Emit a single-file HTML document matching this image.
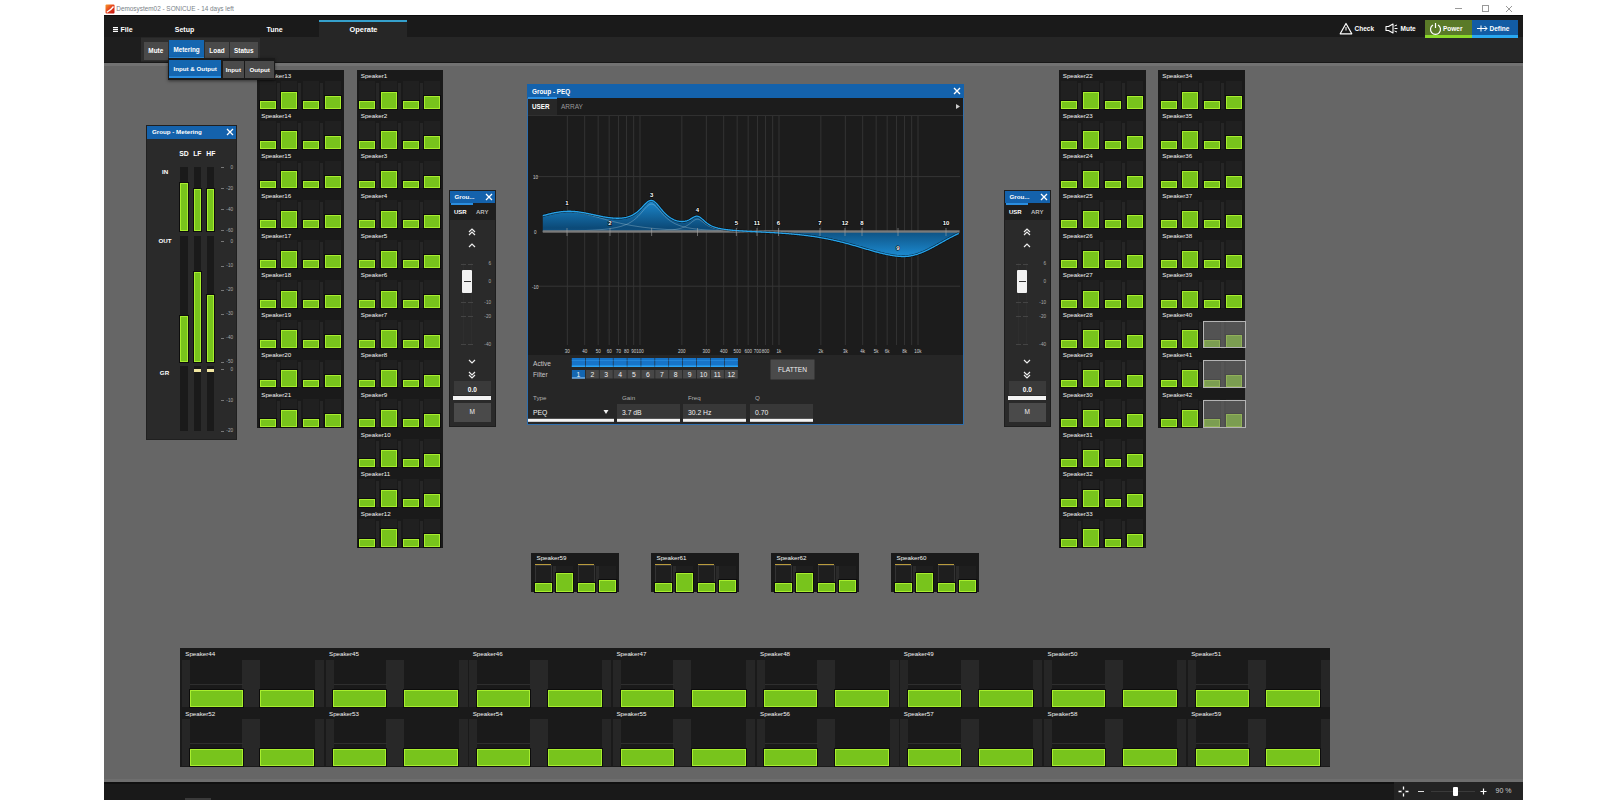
<!DOCTYPE html><html><head><meta charset="utf-8"><style>
html,body{margin:0;padding:0;background:#fff;width:1600px;height:800px;overflow:hidden;position:relative;font-family:"Liberation Sans",sans-serif}
body>div,body>svg{position:absolute}
.t{white-space:nowrap;line-height:12px;height:12px}
.c{width:120px;text-align:center}
.g{position:absolute;background:#78c41c;box-shadow:inset 0 0 0 1px #a8ee2e,0 0 0 1px #0d0d0d}
svg text{font-family:"Liberation Sans",sans-serif}
</style></head><body>
<div style="left:104px;top:15px;width:1419px;height:22px;background:#1a1a1a;"></div>
<div style="left:104px;top:15px;width:1419px;height:1.2px;background:#0c0c0c;"></div>
<div style="left:104px;top:37px;width:1419px;height:25px;background:#262626;"></div>
<div style="left:104px;top:37px;width:37px;height:25px;background:#1e1e1e;"></div>
<div style="left:104px;top:62px;width:1419px;height:720px;background:#666666;"></div>
<div style="left:104px;top:61.5px;width:1419px;height:1.5px;background:#181818;"></div>
<div style="left:104px;top:63px;width:1419px;height:2.5px;background:#727272;"></div>
<div style="left:104px;top:779px;width:1419px;height:3px;background:#6e6e6e;"></div>
<div style="left:104px;top:782px;width:1419px;height:18px;background:#191919;"></div>
<div style="left:104px;top:782px;width:1419px;height:1.5px;background:#101010;"></div>
<div style="left:1394px;top:782px;width:129px;height:18px;background:#232323;"></div>
<div style="left:185px;top:798px;width:26px;height:2px;background:#3a3a3a;"></div>
<svg style="left:104.5px;top:4px" width="10" height="10" viewBox="0 0 10 10"><defs><linearGradient id="ic" x1="0" y1="0" x2="1" y2="1"><stop offset="0" stop-color="#f59a2a"/><stop offset="0.45" stop-color="#e8481e"/><stop offset="1" stop-color="#c01010"/></linearGradient></defs><rect x="0.5" y="0.5" width="9" height="9" rx="1" fill="url(#ic)"/><path d="M8.5 2.5 Q6 6 1.8 8.3" fill="none" stroke="#fff" stroke-width="1.3"/></svg>
<div class="t" style="left:116.3px;top:3px;font-size:6.4px;color:#7a7f88;">Demosystem02 - SONICUE - 14 days left</div>
<div style="left:1455px;top:8px;width:7px;height:1px;background:#999;"></div>
<div style="left:1482px;top:5px;width:5px;height:5px;border:1px solid #999"></div>
<svg style="left:1505px;top:5px" width="8" height="8" viewBox="0 0 8 8"><path d="M1 1 L7 7 M7 1 L1 7" stroke="#999" stroke-width="1"/></svg>
<svg style="left:113px;top:26.5px" width="5" height="5" viewBox="0 0 5 5"><path d="M0 0.6 H5 M0 2.5 H5 M0 4.4 H5" stroke="#fff" stroke-width="1.1"/></svg>
<div class="t" style="left:120.5px;top:23.6px;font-size:7px;color:#fff;font-weight:bold">File</div>
<div class="t c" style="left:124.5px;top:23.6px;font-size:7px;color:#fff;font-weight:bold">Setup</div>
<div class="t c" style="left:214.5px;top:23.6px;font-size:7px;color:#fff;font-weight:bold">Tune</div>
<div style="left:319px;top:21px;width:88px;height:16px;background:#262626;"></div>
<div style="left:319px;top:19.5px;width:88px;height:2px;background:#35a0cc;"></div>
<div class="t c" style="left:303.5px;top:23.6px;font-size:7.4px;color:#fff;font-weight:bold">Operate</div>
<svg style="left:1339px;top:22px" width="14" height="13" viewBox="0 0 14 13"><path d="M7 1.5 L12.8 11.8 L1.2 11.8 Z" fill="none" stroke="#fff" stroke-width="1.2" stroke-linejoin="round"/><path d="M7 5 V8.5" stroke="#fff" stroke-width="1"/></svg>
<div class="t" style="left:1354.5px;top:23.3px;font-size:6.5px;color:#fff;font-weight:bold">Check</div>
<svg style="left:1385px;top:23px" width="13" height="11" viewBox="0 0 13 11"><path d="M1 3.5 H3.5 L8 1 V10 L3.5 7.5 H1 Z" fill="none" stroke="#fff" stroke-width="1.1" stroke-linejoin="round"/><path d="M9.5 3 L12 2 M9.5 5.5 H12.5 M9.5 8 L12 9" fill="none" stroke="#fff" stroke-width="1"/></svg>
<div class="t" style="left:1400.5px;top:23.3px;font-size:6.5px;color:#fff;font-weight:bold">Mute</div>
<div style="left:1425px;top:20px;width:47px;height:17px;background:#5a7a28;"></div>
<div style="left:1425px;top:34.8px;width:47px;height:2.8px;background:#8ad82a;"></div>
<svg style="left:1429px;top:22px" width="13" height="13" viewBox="0 0 13 13"><path d="M4 3 A5 5 0 1 0 9 3" fill="none" stroke="#fff" stroke-width="1.2"/><path d="M6.5 1 V6" stroke="#fff" stroke-width="1.2"/></svg>
<div class="t" style="left:1443px;top:23.3px;font-size:6.5px;color:#fff;font-weight:bold">Power</div>
<div style="left:1472px;top:20px;width:46px;height:17px;background:#125ca4;"></div>
<div style="left:1472px;top:34.8px;width:46px;height:2.8px;background:#2aa8f0;"></div>
<svg style="left:1476px;top:24px" width="12" height="9" viewBox="0 0 12 9"><path d="M1 4.5 H11 M8.5 2 L11 4.5 L8.5 7 M5 1.5 V7.5" fill="none" stroke="#fff" stroke-width="1"/></svg>
<div class="t" style="left:1489.5px;top:23.3px;font-size:6.5px;color:#fff;font-weight:bold">Define</div>
<div style="left:141px;top:38px;width:119px;height:23px;background:#2e2e2e;"></div>
<div style="left:144px;top:41.8px;width:23.6px;height:18.2px;background:#4a4a4a;"></div>
<div class="t c" style="left:95.80000000000001px;top:45.199999999999996px;font-size:6.4px;color:#fff;font-weight:bold">Mute</div>
<div style="left:169.2px;top:40.3px;width:34.7px;height:18.6px;background:#1466b0;"></div>
<div style="left:169.2px;top:56.6px;width:34.7px;height:2.3px;background:#2a8ee0;"></div>
<div class="t c" style="left:126.54999999999998px;top:43.89999999999999px;font-size:6.3px;color:#fff;font-weight:bold">Metering</div>
<div style="left:205.3px;top:41.8px;width:23.4px;height:18.2px;background:#4a4a4a;"></div>
<div class="t c" style="left:157.0px;top:45.199999999999996px;font-size:6.4px;color:#fff;font-weight:bold">Load</div>
<div style="left:229.7px;top:41.8px;width:28.1px;height:18.2px;background:#4a4a4a;"></div>
<div class="t c" style="left:183.75px;top:45.199999999999996px;font-size:6.4px;color:#fff;font-weight:bold">Status</div>
<div style="left:257px;top:70px;width:86.75px;height:358.2px;background:#1a1a1a;"></div>
<div class="t" style="left:261.3px;top:70.4px;font-size:6.2px;color:#f2f2f2;">Speaker13</div>
<div style="left:259.7px;top:81.0px;width:16px;height:27.8px;background:#202020;"></div>
<div style="left:276.7px;top:83.0px;width:3px;height:25.8px;background:#262626;"></div>
<div class="g" style="left:259.7px;top:101.0px;width:16px;height:7.8px"></div>
<div style="left:281.2px;top:81.0px;width:16px;height:27.8px;background:#202020;"></div>
<div style="left:298.2px;top:83.0px;width:3px;height:25.8px;background:#262626;"></div>
<div class="g" style="left:281.2px;top:91.5px;width:16px;height:17.3px"></div>
<div style="left:303.2px;top:81.0px;width:16px;height:27.8px;background:#202020;"></div>
<div style="left:320.2px;top:83.0px;width:3px;height:25.8px;background:#262626;"></div>
<div class="g" style="left:303.2px;top:101.0px;width:16px;height:7.8px"></div>
<div style="left:324.8px;top:81.0px;width:16px;height:27.8px;background:#202020;"></div>
<div class="g" style="left:324.8px;top:96.0px;width:16px;height:12.8px"></div>
<div class="t" style="left:261.3px;top:110.2px;font-size:6.2px;color:#f2f2f2;">Speaker14</div>
<div style="left:259.7px;top:120.8px;width:16px;height:27.8px;background:#202020;"></div>
<div style="left:276.7px;top:122.8px;width:3px;height:25.8px;background:#262626;"></div>
<div class="g" style="left:259.7px;top:140.79999999999998px;width:16px;height:7.8px"></div>
<div style="left:281.2px;top:120.8px;width:16px;height:27.8px;background:#202020;"></div>
<div style="left:298.2px;top:122.8px;width:3px;height:25.8px;background:#262626;"></div>
<div class="g" style="left:281.2px;top:131.29999999999998px;width:16px;height:17.3px"></div>
<div style="left:303.2px;top:120.8px;width:16px;height:27.8px;background:#202020;"></div>
<div style="left:320.2px;top:122.8px;width:3px;height:25.8px;background:#262626;"></div>
<div class="g" style="left:303.2px;top:140.79999999999998px;width:16px;height:7.8px"></div>
<div style="left:324.8px;top:120.8px;width:16px;height:27.8px;background:#202020;"></div>
<div class="g" style="left:324.8px;top:135.79999999999998px;width:16px;height:12.8px"></div>
<div class="t" style="left:261.3px;top:150.0px;font-size:6.2px;color:#f2f2f2;">Speaker15</div>
<div style="left:259.7px;top:160.6px;width:16px;height:27.8px;background:#202020;"></div>
<div style="left:276.7px;top:162.6px;width:3px;height:25.8px;background:#262626;"></div>
<div class="g" style="left:259.7px;top:180.59999999999997px;width:16px;height:7.8px"></div>
<div style="left:281.2px;top:160.6px;width:16px;height:27.8px;background:#202020;"></div>
<div style="left:298.2px;top:162.6px;width:3px;height:25.8px;background:#262626;"></div>
<div class="g" style="left:281.2px;top:171.09999999999997px;width:16px;height:17.3px"></div>
<div style="left:303.2px;top:160.6px;width:16px;height:27.8px;background:#202020;"></div>
<div style="left:320.2px;top:162.6px;width:3px;height:25.8px;background:#262626;"></div>
<div class="g" style="left:303.2px;top:180.59999999999997px;width:16px;height:7.8px"></div>
<div style="left:324.8px;top:160.6px;width:16px;height:27.8px;background:#202020;"></div>
<div class="g" style="left:324.8px;top:175.59999999999997px;width:16px;height:12.8px"></div>
<div class="t" style="left:261.3px;top:189.79999999999998px;font-size:6.2px;color:#f2f2f2;">Speaker16</div>
<div style="left:259.7px;top:200.39999999999998px;width:16px;height:27.8px;background:#202020;"></div>
<div style="left:276.7px;top:202.39999999999998px;width:3px;height:25.8px;background:#262626;"></div>
<div class="g" style="left:259.7px;top:220.39999999999998px;width:16px;height:7.8px"></div>
<div style="left:281.2px;top:200.39999999999998px;width:16px;height:27.8px;background:#202020;"></div>
<div style="left:298.2px;top:202.39999999999998px;width:3px;height:25.8px;background:#262626;"></div>
<div class="g" style="left:281.2px;top:210.89999999999998px;width:16px;height:17.3px"></div>
<div style="left:303.2px;top:200.39999999999998px;width:16px;height:27.8px;background:#202020;"></div>
<div style="left:320.2px;top:202.39999999999998px;width:3px;height:25.8px;background:#262626;"></div>
<div class="g" style="left:303.2px;top:220.39999999999998px;width:16px;height:7.8px"></div>
<div style="left:324.8px;top:200.39999999999998px;width:16px;height:27.8px;background:#202020;"></div>
<div class="g" style="left:324.8px;top:215.39999999999998px;width:16px;height:12.8px"></div>
<div class="t" style="left:261.3px;top:229.6px;font-size:6.2px;color:#f2f2f2;">Speaker17</div>
<div style="left:259.7px;top:240.2px;width:16px;height:27.8px;background:#202020;"></div>
<div style="left:276.7px;top:242.2px;width:3px;height:25.8px;background:#262626;"></div>
<div class="g" style="left:259.7px;top:260.2px;width:16px;height:7.8px"></div>
<div style="left:281.2px;top:240.2px;width:16px;height:27.8px;background:#202020;"></div>
<div style="left:298.2px;top:242.2px;width:3px;height:25.8px;background:#262626;"></div>
<div class="g" style="left:281.2px;top:250.7px;width:16px;height:17.3px"></div>
<div style="left:303.2px;top:240.2px;width:16px;height:27.8px;background:#202020;"></div>
<div style="left:320.2px;top:242.2px;width:3px;height:25.8px;background:#262626;"></div>
<div class="g" style="left:303.2px;top:260.2px;width:16px;height:7.8px"></div>
<div style="left:324.8px;top:240.2px;width:16px;height:27.8px;background:#202020;"></div>
<div class="g" style="left:324.8px;top:255.2px;width:16px;height:12.8px"></div>
<div class="t" style="left:261.3px;top:269.4px;font-size:6.2px;color:#f2f2f2;">Speaker18</div>
<div style="left:259.7px;top:280.0px;width:16px;height:27.8px;background:#202020;"></div>
<div style="left:276.7px;top:282.0px;width:3px;height:25.8px;background:#262626;"></div>
<div class="g" style="left:259.7px;top:300.0px;width:16px;height:7.8px"></div>
<div style="left:281.2px;top:280.0px;width:16px;height:27.8px;background:#202020;"></div>
<div style="left:298.2px;top:282.0px;width:3px;height:25.8px;background:#262626;"></div>
<div class="g" style="left:281.2px;top:290.5px;width:16px;height:17.3px"></div>
<div style="left:303.2px;top:280.0px;width:16px;height:27.8px;background:#202020;"></div>
<div style="left:320.2px;top:282.0px;width:3px;height:25.8px;background:#262626;"></div>
<div class="g" style="left:303.2px;top:300.0px;width:16px;height:7.8px"></div>
<div style="left:324.8px;top:280.0px;width:16px;height:27.8px;background:#202020;"></div>
<div class="g" style="left:324.8px;top:295.0px;width:16px;height:12.8px"></div>
<div class="t" style="left:261.3px;top:309.19999999999993px;font-size:6.2px;color:#f2f2f2;">Speaker19</div>
<div style="left:259.7px;top:319.79999999999995px;width:16px;height:27.8px;background:#202020;"></div>
<div style="left:276.7px;top:321.79999999999995px;width:3px;height:25.8px;background:#262626;"></div>
<div class="g" style="left:259.7px;top:339.79999999999995px;width:16px;height:7.8px"></div>
<div style="left:281.2px;top:319.79999999999995px;width:16px;height:27.8px;background:#202020;"></div>
<div style="left:298.2px;top:321.79999999999995px;width:3px;height:25.8px;background:#262626;"></div>
<div class="g" style="left:281.2px;top:330.29999999999995px;width:16px;height:17.3px"></div>
<div style="left:303.2px;top:319.79999999999995px;width:16px;height:27.8px;background:#202020;"></div>
<div style="left:320.2px;top:321.79999999999995px;width:3px;height:25.8px;background:#262626;"></div>
<div class="g" style="left:303.2px;top:339.79999999999995px;width:16px;height:7.8px"></div>
<div style="left:324.8px;top:319.79999999999995px;width:16px;height:27.8px;background:#202020;"></div>
<div class="g" style="left:324.8px;top:334.79999999999995px;width:16px;height:12.8px"></div>
<div class="t" style="left:261.3px;top:348.99999999999994px;font-size:6.2px;color:#f2f2f2;">Speaker20</div>
<div style="left:259.7px;top:359.59999999999997px;width:16px;height:27.8px;background:#202020;"></div>
<div style="left:276.7px;top:361.59999999999997px;width:3px;height:25.8px;background:#262626;"></div>
<div class="g" style="left:259.7px;top:379.59999999999997px;width:16px;height:7.8px"></div>
<div style="left:281.2px;top:359.59999999999997px;width:16px;height:27.8px;background:#202020;"></div>
<div style="left:298.2px;top:361.59999999999997px;width:3px;height:25.8px;background:#262626;"></div>
<div class="g" style="left:281.2px;top:370.09999999999997px;width:16px;height:17.3px"></div>
<div style="left:303.2px;top:359.59999999999997px;width:16px;height:27.8px;background:#202020;"></div>
<div style="left:320.2px;top:361.59999999999997px;width:3px;height:25.8px;background:#262626;"></div>
<div class="g" style="left:303.2px;top:379.59999999999997px;width:16px;height:7.8px"></div>
<div style="left:324.8px;top:359.59999999999997px;width:16px;height:27.8px;background:#202020;"></div>
<div class="g" style="left:324.8px;top:374.59999999999997px;width:16px;height:12.8px"></div>
<div class="t" style="left:261.3px;top:388.79999999999995px;font-size:6.2px;color:#f2f2f2;">Speaker21</div>
<div style="left:259.7px;top:399.4px;width:16px;height:27.8px;background:#202020;"></div>
<div style="left:276.7px;top:401.4px;width:3px;height:25.8px;background:#262626;"></div>
<div class="g" style="left:259.7px;top:419.4px;width:16px;height:7.8px"></div>
<div style="left:281.2px;top:399.4px;width:16px;height:27.8px;background:#202020;"></div>
<div style="left:298.2px;top:401.4px;width:3px;height:25.8px;background:#262626;"></div>
<div class="g" style="left:281.2px;top:409.9px;width:16px;height:17.3px"></div>
<div style="left:303.2px;top:399.4px;width:16px;height:27.8px;background:#202020;"></div>
<div style="left:320.2px;top:401.4px;width:3px;height:25.8px;background:#262626;"></div>
<div class="g" style="left:303.2px;top:419.4px;width:16px;height:7.8px"></div>
<div style="left:324.8px;top:399.4px;width:16px;height:27.8px;background:#202020;"></div>
<div class="g" style="left:324.8px;top:414.4px;width:16px;height:12.8px"></div>
<div style="left:356.5px;top:70px;width:86.5px;height:477.59999999999997px;background:#1a1a1a;"></div>
<div class="t" style="left:360.8px;top:70.4px;font-size:6.2px;color:#f2f2f2;">Speaker1</div>
<div style="left:359.1922190201729px;top:81.0px;width:16px;height:27.8px;background:#202020;"></div>
<div style="left:376.1922190201729px;top:83.0px;width:3px;height:25.8px;background:#262626;"></div>
<div class="g" style="left:359.1922190201729px;top:101.0px;width:16px;height:7.8px"></div>
<div style="left:380.6302593659942px;top:81.0px;width:16px;height:27.8px;background:#202020;"></div>
<div style="left:397.6302593659942px;top:83.0px;width:3px;height:25.8px;background:#262626;"></div>
<div class="g" style="left:380.6302593659942px;top:91.5px;width:16px;height:17.3px"></div>
<div style="left:402.56685878962537px;top:81.0px;width:16px;height:27.8px;background:#202020;"></div>
<div style="left:419.56685878962537px;top:83.0px;width:3px;height:25.8px;background:#262626;"></div>
<div class="g" style="left:402.56685878962537px;top:101.0px;width:16px;height:7.8px"></div>
<div style="left:424.1046109510086px;top:81.0px;width:16px;height:27.8px;background:#202020;"></div>
<div class="g" style="left:424.1046109510086px;top:96.0px;width:16px;height:12.8px"></div>
<div class="t" style="left:360.8px;top:110.2px;font-size:6.2px;color:#f2f2f2;">Speaker2</div>
<div style="left:359.1922190201729px;top:120.8px;width:16px;height:27.8px;background:#202020;"></div>
<div style="left:376.1922190201729px;top:122.8px;width:3px;height:25.8px;background:#262626;"></div>
<div class="g" style="left:359.1922190201729px;top:140.79999999999998px;width:16px;height:7.8px"></div>
<div style="left:380.6302593659942px;top:120.8px;width:16px;height:27.8px;background:#202020;"></div>
<div style="left:397.6302593659942px;top:122.8px;width:3px;height:25.8px;background:#262626;"></div>
<div class="g" style="left:380.6302593659942px;top:131.29999999999998px;width:16px;height:17.3px"></div>
<div style="left:402.56685878962537px;top:120.8px;width:16px;height:27.8px;background:#202020;"></div>
<div style="left:419.56685878962537px;top:122.8px;width:3px;height:25.8px;background:#262626;"></div>
<div class="g" style="left:402.56685878962537px;top:140.79999999999998px;width:16px;height:7.8px"></div>
<div style="left:424.1046109510086px;top:120.8px;width:16px;height:27.8px;background:#202020;"></div>
<div class="g" style="left:424.1046109510086px;top:135.79999999999998px;width:16px;height:12.8px"></div>
<div class="t" style="left:360.8px;top:150.0px;font-size:6.2px;color:#f2f2f2;">Speaker3</div>
<div style="left:359.1922190201729px;top:160.6px;width:16px;height:27.8px;background:#202020;"></div>
<div style="left:376.1922190201729px;top:162.6px;width:3px;height:25.8px;background:#262626;"></div>
<div class="g" style="left:359.1922190201729px;top:180.59999999999997px;width:16px;height:7.8px"></div>
<div style="left:380.6302593659942px;top:160.6px;width:16px;height:27.8px;background:#202020;"></div>
<div style="left:397.6302593659942px;top:162.6px;width:3px;height:25.8px;background:#262626;"></div>
<div class="g" style="left:380.6302593659942px;top:171.09999999999997px;width:16px;height:17.3px"></div>
<div style="left:402.56685878962537px;top:160.6px;width:16px;height:27.8px;background:#202020;"></div>
<div style="left:419.56685878962537px;top:162.6px;width:3px;height:25.8px;background:#262626;"></div>
<div class="g" style="left:402.56685878962537px;top:180.59999999999997px;width:16px;height:7.8px"></div>
<div style="left:424.1046109510086px;top:160.6px;width:16px;height:27.8px;background:#202020;"></div>
<div class="g" style="left:424.1046109510086px;top:175.59999999999997px;width:16px;height:12.8px"></div>
<div class="t" style="left:360.8px;top:189.79999999999998px;font-size:6.2px;color:#f2f2f2;">Speaker4</div>
<div style="left:359.1922190201729px;top:200.39999999999998px;width:16px;height:27.8px;background:#202020;"></div>
<div style="left:376.1922190201729px;top:202.39999999999998px;width:3px;height:25.8px;background:#262626;"></div>
<div class="g" style="left:359.1922190201729px;top:220.39999999999998px;width:16px;height:7.8px"></div>
<div style="left:380.6302593659942px;top:200.39999999999998px;width:16px;height:27.8px;background:#202020;"></div>
<div style="left:397.6302593659942px;top:202.39999999999998px;width:3px;height:25.8px;background:#262626;"></div>
<div class="g" style="left:380.6302593659942px;top:210.89999999999998px;width:16px;height:17.3px"></div>
<div style="left:402.56685878962537px;top:200.39999999999998px;width:16px;height:27.8px;background:#202020;"></div>
<div style="left:419.56685878962537px;top:202.39999999999998px;width:3px;height:25.8px;background:#262626;"></div>
<div class="g" style="left:402.56685878962537px;top:220.39999999999998px;width:16px;height:7.8px"></div>
<div style="left:424.1046109510086px;top:200.39999999999998px;width:16px;height:27.8px;background:#202020;"></div>
<div class="g" style="left:424.1046109510086px;top:215.39999999999998px;width:16px;height:12.8px"></div>
<div class="t" style="left:360.8px;top:229.6px;font-size:6.2px;color:#f2f2f2;">Speaker5</div>
<div style="left:359.1922190201729px;top:240.2px;width:16px;height:27.8px;background:#202020;"></div>
<div style="left:376.1922190201729px;top:242.2px;width:3px;height:25.8px;background:#262626;"></div>
<div class="g" style="left:359.1922190201729px;top:260.2px;width:16px;height:7.8px"></div>
<div style="left:380.6302593659942px;top:240.2px;width:16px;height:27.8px;background:#202020;"></div>
<div style="left:397.6302593659942px;top:242.2px;width:3px;height:25.8px;background:#262626;"></div>
<div class="g" style="left:380.6302593659942px;top:250.7px;width:16px;height:17.3px"></div>
<div style="left:402.56685878962537px;top:240.2px;width:16px;height:27.8px;background:#202020;"></div>
<div style="left:419.56685878962537px;top:242.2px;width:3px;height:25.8px;background:#262626;"></div>
<div class="g" style="left:402.56685878962537px;top:260.2px;width:16px;height:7.8px"></div>
<div style="left:424.1046109510086px;top:240.2px;width:16px;height:27.8px;background:#202020;"></div>
<div class="g" style="left:424.1046109510086px;top:255.2px;width:16px;height:12.8px"></div>
<div class="t" style="left:360.8px;top:269.4px;font-size:6.2px;color:#f2f2f2;">Speaker6</div>
<div style="left:359.1922190201729px;top:280.0px;width:16px;height:27.8px;background:#202020;"></div>
<div style="left:376.1922190201729px;top:282.0px;width:3px;height:25.8px;background:#262626;"></div>
<div class="g" style="left:359.1922190201729px;top:300.0px;width:16px;height:7.8px"></div>
<div style="left:380.6302593659942px;top:280.0px;width:16px;height:27.8px;background:#202020;"></div>
<div style="left:397.6302593659942px;top:282.0px;width:3px;height:25.8px;background:#262626;"></div>
<div class="g" style="left:380.6302593659942px;top:290.5px;width:16px;height:17.3px"></div>
<div style="left:402.56685878962537px;top:280.0px;width:16px;height:27.8px;background:#202020;"></div>
<div style="left:419.56685878962537px;top:282.0px;width:3px;height:25.8px;background:#262626;"></div>
<div class="g" style="left:402.56685878962537px;top:300.0px;width:16px;height:7.8px"></div>
<div style="left:424.1046109510086px;top:280.0px;width:16px;height:27.8px;background:#202020;"></div>
<div class="g" style="left:424.1046109510086px;top:295.0px;width:16px;height:12.8px"></div>
<div class="t" style="left:360.8px;top:309.19999999999993px;font-size:6.2px;color:#f2f2f2;">Speaker7</div>
<div style="left:359.1922190201729px;top:319.79999999999995px;width:16px;height:27.8px;background:#202020;"></div>
<div style="left:376.1922190201729px;top:321.79999999999995px;width:3px;height:25.8px;background:#262626;"></div>
<div class="g" style="left:359.1922190201729px;top:339.79999999999995px;width:16px;height:7.8px"></div>
<div style="left:380.6302593659942px;top:319.79999999999995px;width:16px;height:27.8px;background:#202020;"></div>
<div style="left:397.6302593659942px;top:321.79999999999995px;width:3px;height:25.8px;background:#262626;"></div>
<div class="g" style="left:380.6302593659942px;top:330.29999999999995px;width:16px;height:17.3px"></div>
<div style="left:402.56685878962537px;top:319.79999999999995px;width:16px;height:27.8px;background:#202020;"></div>
<div style="left:419.56685878962537px;top:321.79999999999995px;width:3px;height:25.8px;background:#262626;"></div>
<div class="g" style="left:402.56685878962537px;top:339.79999999999995px;width:16px;height:7.8px"></div>
<div style="left:424.1046109510086px;top:319.79999999999995px;width:16px;height:27.8px;background:#202020;"></div>
<div class="g" style="left:424.1046109510086px;top:334.79999999999995px;width:16px;height:12.8px"></div>
<div class="t" style="left:360.8px;top:348.99999999999994px;font-size:6.2px;color:#f2f2f2;">Speaker8</div>
<div style="left:359.1922190201729px;top:359.59999999999997px;width:16px;height:27.8px;background:#202020;"></div>
<div style="left:376.1922190201729px;top:361.59999999999997px;width:3px;height:25.8px;background:#262626;"></div>
<div class="g" style="left:359.1922190201729px;top:379.59999999999997px;width:16px;height:7.8px"></div>
<div style="left:380.6302593659942px;top:359.59999999999997px;width:16px;height:27.8px;background:#202020;"></div>
<div style="left:397.6302593659942px;top:361.59999999999997px;width:3px;height:25.8px;background:#262626;"></div>
<div class="g" style="left:380.6302593659942px;top:370.09999999999997px;width:16px;height:17.3px"></div>
<div style="left:402.56685878962537px;top:359.59999999999997px;width:16px;height:27.8px;background:#202020;"></div>
<div style="left:419.56685878962537px;top:361.59999999999997px;width:3px;height:25.8px;background:#262626;"></div>
<div class="g" style="left:402.56685878962537px;top:379.59999999999997px;width:16px;height:7.8px"></div>
<div style="left:424.1046109510086px;top:359.59999999999997px;width:16px;height:27.8px;background:#202020;"></div>
<div class="g" style="left:424.1046109510086px;top:374.59999999999997px;width:16px;height:12.8px"></div>
<div class="t" style="left:360.8px;top:388.79999999999995px;font-size:6.2px;color:#f2f2f2;">Speaker9</div>
<div style="left:359.1922190201729px;top:399.4px;width:16px;height:27.8px;background:#202020;"></div>
<div style="left:376.1922190201729px;top:401.4px;width:3px;height:25.8px;background:#262626;"></div>
<div class="g" style="left:359.1922190201729px;top:419.4px;width:16px;height:7.8px"></div>
<div style="left:380.6302593659942px;top:399.4px;width:16px;height:27.8px;background:#202020;"></div>
<div style="left:397.6302593659942px;top:401.4px;width:3px;height:25.8px;background:#262626;"></div>
<div class="g" style="left:380.6302593659942px;top:409.9px;width:16px;height:17.3px"></div>
<div style="left:402.56685878962537px;top:399.4px;width:16px;height:27.8px;background:#202020;"></div>
<div style="left:419.56685878962537px;top:401.4px;width:3px;height:25.8px;background:#262626;"></div>
<div class="g" style="left:402.56685878962537px;top:419.4px;width:16px;height:7.8px"></div>
<div style="left:424.1046109510086px;top:399.4px;width:16px;height:27.8px;background:#202020;"></div>
<div class="g" style="left:424.1046109510086px;top:414.4px;width:16px;height:12.8px"></div>
<div class="t" style="left:360.8px;top:428.59999999999997px;font-size:6.2px;color:#f2f2f2;">Speaker10</div>
<div style="left:359.1922190201729px;top:439.2px;width:16px;height:27.8px;background:#202020;"></div>
<div style="left:376.1922190201729px;top:441.2px;width:3px;height:25.8px;background:#262626;"></div>
<div class="g" style="left:359.1922190201729px;top:459.2px;width:16px;height:7.8px"></div>
<div style="left:380.6302593659942px;top:439.2px;width:16px;height:27.8px;background:#202020;"></div>
<div style="left:397.6302593659942px;top:441.2px;width:3px;height:25.8px;background:#262626;"></div>
<div class="g" style="left:380.6302593659942px;top:449.7px;width:16px;height:17.3px"></div>
<div style="left:402.56685878962537px;top:439.2px;width:16px;height:27.8px;background:#202020;"></div>
<div style="left:419.56685878962537px;top:441.2px;width:3px;height:25.8px;background:#262626;"></div>
<div class="g" style="left:402.56685878962537px;top:459.2px;width:16px;height:7.8px"></div>
<div style="left:424.1046109510086px;top:439.2px;width:16px;height:27.8px;background:#202020;"></div>
<div class="g" style="left:424.1046109510086px;top:454.2px;width:16px;height:12.8px"></div>
<div class="t" style="left:360.8px;top:468.4px;font-size:6.2px;color:#f2f2f2;">Speaker11</div>
<div style="left:359.1922190201729px;top:479.0px;width:16px;height:27.8px;background:#202020;"></div>
<div style="left:376.1922190201729px;top:481.0px;width:3px;height:25.8px;background:#262626;"></div>
<div class="g" style="left:359.1922190201729px;top:499.0px;width:16px;height:7.8px"></div>
<div style="left:380.6302593659942px;top:479.0px;width:16px;height:27.8px;background:#202020;"></div>
<div style="left:397.6302593659942px;top:481.0px;width:3px;height:25.8px;background:#262626;"></div>
<div class="g" style="left:380.6302593659942px;top:489.5px;width:16px;height:17.3px"></div>
<div style="left:402.56685878962537px;top:479.0px;width:16px;height:27.8px;background:#202020;"></div>
<div style="left:419.56685878962537px;top:481.0px;width:3px;height:25.8px;background:#262626;"></div>
<div class="g" style="left:402.56685878962537px;top:499.0px;width:16px;height:7.8px"></div>
<div style="left:424.1046109510086px;top:479.0px;width:16px;height:27.8px;background:#202020;"></div>
<div class="g" style="left:424.1046109510086px;top:494.0px;width:16px;height:12.8px"></div>
<div class="t" style="left:360.8px;top:508.19999999999993px;font-size:6.2px;color:#f2f2f2;">Speaker12</div>
<div style="left:359.1922190201729px;top:518.8px;width:16px;height:27.8px;background:#202020;"></div>
<div style="left:376.1922190201729px;top:520.8px;width:3px;height:25.8px;background:#262626;"></div>
<div class="g" style="left:359.1922190201729px;top:538.8px;width:16px;height:7.8px"></div>
<div style="left:380.6302593659942px;top:518.8px;width:16px;height:27.8px;background:#202020;"></div>
<div style="left:397.6302593659942px;top:520.8px;width:3px;height:25.8px;background:#262626;"></div>
<div class="g" style="left:380.6302593659942px;top:529.3px;width:16px;height:17.3px"></div>
<div style="left:402.56685878962537px;top:518.8px;width:16px;height:27.8px;background:#202020;"></div>
<div style="left:419.56685878962537px;top:520.8px;width:3px;height:25.8px;background:#262626;"></div>
<div class="g" style="left:402.56685878962537px;top:538.8px;width:16px;height:7.8px"></div>
<div style="left:424.1046109510086px;top:518.8px;width:16px;height:27.8px;background:#202020;"></div>
<div class="g" style="left:424.1046109510086px;top:533.8px;width:16px;height:12.8px"></div>
<div style="left:1058.5px;top:70px;width:87.8px;height:477.59999999999997px;background:#1a1a1a;"></div>
<div class="t" style="left:1062.8px;top:70.4px;font-size:6.2px;color:#f2f2f2;">Speaker22</div>
<div style="left:1061.2326801152738px;top:81.0px;width:16px;height:27.8px;background:#202020;"></div>
<div style="left:1078.2326801152738px;top:83.0px;width:3px;height:25.8px;background:#262626;"></div>
<div class="g" style="left:1061.2326801152738px;top:101.0px;width:16px;height:7.8px"></div>
<div style="left:1082.9929106628242px;top:81.0px;width:16px;height:27.8px;background:#202020;"></div>
<div style="left:1099.9929106628242px;top:83.0px;width:3px;height:25.8px;background:#262626;"></div>
<div class="g" style="left:1082.9929106628242px;top:91.5px;width:16px;height:17.3px"></div>
<div style="left:1105.2591930835736px;top:81.0px;width:16px;height:27.8px;background:#202020;"></div>
<div style="left:1122.2591930835736px;top:83.0px;width:3px;height:25.8px;background:#262626;"></div>
<div class="g" style="left:1105.2591930835736px;top:101.0px;width:16px;height:7.8px"></div>
<div style="left:1127.1206340057638px;top:81.0px;width:16px;height:27.8px;background:#202020;"></div>
<div class="g" style="left:1127.1206340057638px;top:96.0px;width:16px;height:12.8px"></div>
<div class="t" style="left:1062.8px;top:110.2px;font-size:6.2px;color:#f2f2f2;">Speaker23</div>
<div style="left:1061.2326801152738px;top:120.8px;width:16px;height:27.8px;background:#202020;"></div>
<div style="left:1078.2326801152738px;top:122.8px;width:3px;height:25.8px;background:#262626;"></div>
<div class="g" style="left:1061.2326801152738px;top:140.79999999999998px;width:16px;height:7.8px"></div>
<div style="left:1082.9929106628242px;top:120.8px;width:16px;height:27.8px;background:#202020;"></div>
<div style="left:1099.9929106628242px;top:122.8px;width:3px;height:25.8px;background:#262626;"></div>
<div class="g" style="left:1082.9929106628242px;top:131.29999999999998px;width:16px;height:17.3px"></div>
<div style="left:1105.2591930835736px;top:120.8px;width:16px;height:27.8px;background:#202020;"></div>
<div style="left:1122.2591930835736px;top:122.8px;width:3px;height:25.8px;background:#262626;"></div>
<div class="g" style="left:1105.2591930835736px;top:140.79999999999998px;width:16px;height:7.8px"></div>
<div style="left:1127.1206340057638px;top:120.8px;width:16px;height:27.8px;background:#202020;"></div>
<div class="g" style="left:1127.1206340057638px;top:135.79999999999998px;width:16px;height:12.8px"></div>
<div class="t" style="left:1062.8px;top:150.0px;font-size:6.2px;color:#f2f2f2;">Speaker24</div>
<div style="left:1061.2326801152738px;top:160.6px;width:16px;height:27.8px;background:#202020;"></div>
<div style="left:1078.2326801152738px;top:162.6px;width:3px;height:25.8px;background:#262626;"></div>
<div class="g" style="left:1061.2326801152738px;top:180.59999999999997px;width:16px;height:7.8px"></div>
<div style="left:1082.9929106628242px;top:160.6px;width:16px;height:27.8px;background:#202020;"></div>
<div style="left:1099.9929106628242px;top:162.6px;width:3px;height:25.8px;background:#262626;"></div>
<div class="g" style="left:1082.9929106628242px;top:171.09999999999997px;width:16px;height:17.3px"></div>
<div style="left:1105.2591930835736px;top:160.6px;width:16px;height:27.8px;background:#202020;"></div>
<div style="left:1122.2591930835736px;top:162.6px;width:3px;height:25.8px;background:#262626;"></div>
<div class="g" style="left:1105.2591930835736px;top:180.59999999999997px;width:16px;height:7.8px"></div>
<div style="left:1127.1206340057638px;top:160.6px;width:16px;height:27.8px;background:#202020;"></div>
<div class="g" style="left:1127.1206340057638px;top:175.59999999999997px;width:16px;height:12.8px"></div>
<div class="t" style="left:1062.8px;top:189.79999999999998px;font-size:6.2px;color:#f2f2f2;">Speaker25</div>
<div style="left:1061.2326801152738px;top:200.39999999999998px;width:16px;height:27.8px;background:#202020;"></div>
<div style="left:1078.2326801152738px;top:202.39999999999998px;width:3px;height:25.8px;background:#262626;"></div>
<div class="g" style="left:1061.2326801152738px;top:220.39999999999998px;width:16px;height:7.8px"></div>
<div style="left:1082.9929106628242px;top:200.39999999999998px;width:16px;height:27.8px;background:#202020;"></div>
<div style="left:1099.9929106628242px;top:202.39999999999998px;width:3px;height:25.8px;background:#262626;"></div>
<div class="g" style="left:1082.9929106628242px;top:210.89999999999998px;width:16px;height:17.3px"></div>
<div style="left:1105.2591930835736px;top:200.39999999999998px;width:16px;height:27.8px;background:#202020;"></div>
<div style="left:1122.2591930835736px;top:202.39999999999998px;width:3px;height:25.8px;background:#262626;"></div>
<div class="g" style="left:1105.2591930835736px;top:220.39999999999998px;width:16px;height:7.8px"></div>
<div style="left:1127.1206340057638px;top:200.39999999999998px;width:16px;height:27.8px;background:#202020;"></div>
<div class="g" style="left:1127.1206340057638px;top:215.39999999999998px;width:16px;height:12.8px"></div>
<div class="t" style="left:1062.8px;top:229.6px;font-size:6.2px;color:#f2f2f2;">Speaker26</div>
<div style="left:1061.2326801152738px;top:240.2px;width:16px;height:27.8px;background:#202020;"></div>
<div style="left:1078.2326801152738px;top:242.2px;width:3px;height:25.8px;background:#262626;"></div>
<div class="g" style="left:1061.2326801152738px;top:260.2px;width:16px;height:7.8px"></div>
<div style="left:1082.9929106628242px;top:240.2px;width:16px;height:27.8px;background:#202020;"></div>
<div style="left:1099.9929106628242px;top:242.2px;width:3px;height:25.8px;background:#262626;"></div>
<div class="g" style="left:1082.9929106628242px;top:250.7px;width:16px;height:17.3px"></div>
<div style="left:1105.2591930835736px;top:240.2px;width:16px;height:27.8px;background:#202020;"></div>
<div style="left:1122.2591930835736px;top:242.2px;width:3px;height:25.8px;background:#262626;"></div>
<div class="g" style="left:1105.2591930835736px;top:260.2px;width:16px;height:7.8px"></div>
<div style="left:1127.1206340057638px;top:240.2px;width:16px;height:27.8px;background:#202020;"></div>
<div class="g" style="left:1127.1206340057638px;top:255.2px;width:16px;height:12.8px"></div>
<div class="t" style="left:1062.8px;top:269.4px;font-size:6.2px;color:#f2f2f2;">Speaker27</div>
<div style="left:1061.2326801152738px;top:280.0px;width:16px;height:27.8px;background:#202020;"></div>
<div style="left:1078.2326801152738px;top:282.0px;width:3px;height:25.8px;background:#262626;"></div>
<div class="g" style="left:1061.2326801152738px;top:300.0px;width:16px;height:7.8px"></div>
<div style="left:1082.9929106628242px;top:280.0px;width:16px;height:27.8px;background:#202020;"></div>
<div style="left:1099.9929106628242px;top:282.0px;width:3px;height:25.8px;background:#262626;"></div>
<div class="g" style="left:1082.9929106628242px;top:290.5px;width:16px;height:17.3px"></div>
<div style="left:1105.2591930835736px;top:280.0px;width:16px;height:27.8px;background:#202020;"></div>
<div style="left:1122.2591930835736px;top:282.0px;width:3px;height:25.8px;background:#262626;"></div>
<div class="g" style="left:1105.2591930835736px;top:300.0px;width:16px;height:7.8px"></div>
<div style="left:1127.1206340057638px;top:280.0px;width:16px;height:27.8px;background:#202020;"></div>
<div class="g" style="left:1127.1206340057638px;top:295.0px;width:16px;height:12.8px"></div>
<div class="t" style="left:1062.8px;top:309.19999999999993px;font-size:6.2px;color:#f2f2f2;">Speaker28</div>
<div style="left:1061.2326801152738px;top:319.79999999999995px;width:16px;height:27.8px;background:#202020;"></div>
<div style="left:1078.2326801152738px;top:321.79999999999995px;width:3px;height:25.8px;background:#262626;"></div>
<div class="g" style="left:1061.2326801152738px;top:339.79999999999995px;width:16px;height:7.8px"></div>
<div style="left:1082.9929106628242px;top:319.79999999999995px;width:16px;height:27.8px;background:#202020;"></div>
<div style="left:1099.9929106628242px;top:321.79999999999995px;width:3px;height:25.8px;background:#262626;"></div>
<div class="g" style="left:1082.9929106628242px;top:330.29999999999995px;width:16px;height:17.3px"></div>
<div style="left:1105.2591930835736px;top:319.79999999999995px;width:16px;height:27.8px;background:#202020;"></div>
<div style="left:1122.2591930835736px;top:321.79999999999995px;width:3px;height:25.8px;background:#262626;"></div>
<div class="g" style="left:1105.2591930835736px;top:339.79999999999995px;width:16px;height:7.8px"></div>
<div style="left:1127.1206340057638px;top:319.79999999999995px;width:16px;height:27.8px;background:#202020;"></div>
<div class="g" style="left:1127.1206340057638px;top:334.79999999999995px;width:16px;height:12.8px"></div>
<div class="t" style="left:1062.8px;top:348.99999999999994px;font-size:6.2px;color:#f2f2f2;">Speaker29</div>
<div style="left:1061.2326801152738px;top:359.59999999999997px;width:16px;height:27.8px;background:#202020;"></div>
<div style="left:1078.2326801152738px;top:361.59999999999997px;width:3px;height:25.8px;background:#262626;"></div>
<div class="g" style="left:1061.2326801152738px;top:379.59999999999997px;width:16px;height:7.8px"></div>
<div style="left:1082.9929106628242px;top:359.59999999999997px;width:16px;height:27.8px;background:#202020;"></div>
<div style="left:1099.9929106628242px;top:361.59999999999997px;width:3px;height:25.8px;background:#262626;"></div>
<div class="g" style="left:1082.9929106628242px;top:370.09999999999997px;width:16px;height:17.3px"></div>
<div style="left:1105.2591930835736px;top:359.59999999999997px;width:16px;height:27.8px;background:#202020;"></div>
<div style="left:1122.2591930835736px;top:361.59999999999997px;width:3px;height:25.8px;background:#262626;"></div>
<div class="g" style="left:1105.2591930835736px;top:379.59999999999997px;width:16px;height:7.8px"></div>
<div style="left:1127.1206340057638px;top:359.59999999999997px;width:16px;height:27.8px;background:#202020;"></div>
<div class="g" style="left:1127.1206340057638px;top:374.59999999999997px;width:16px;height:12.8px"></div>
<div class="t" style="left:1062.8px;top:388.79999999999995px;font-size:6.2px;color:#f2f2f2;">Speaker30</div>
<div style="left:1061.2326801152738px;top:399.4px;width:16px;height:27.8px;background:#202020;"></div>
<div style="left:1078.2326801152738px;top:401.4px;width:3px;height:25.8px;background:#262626;"></div>
<div class="g" style="left:1061.2326801152738px;top:419.4px;width:16px;height:7.8px"></div>
<div style="left:1082.9929106628242px;top:399.4px;width:16px;height:27.8px;background:#202020;"></div>
<div style="left:1099.9929106628242px;top:401.4px;width:3px;height:25.8px;background:#262626;"></div>
<div class="g" style="left:1082.9929106628242px;top:409.9px;width:16px;height:17.3px"></div>
<div style="left:1105.2591930835736px;top:399.4px;width:16px;height:27.8px;background:#202020;"></div>
<div style="left:1122.2591930835736px;top:401.4px;width:3px;height:25.8px;background:#262626;"></div>
<div class="g" style="left:1105.2591930835736px;top:419.4px;width:16px;height:7.8px"></div>
<div style="left:1127.1206340057638px;top:399.4px;width:16px;height:27.8px;background:#202020;"></div>
<div class="g" style="left:1127.1206340057638px;top:414.4px;width:16px;height:12.8px"></div>
<div class="t" style="left:1062.8px;top:428.59999999999997px;font-size:6.2px;color:#f2f2f2;">Speaker31</div>
<div style="left:1061.2326801152738px;top:439.2px;width:16px;height:27.8px;background:#202020;"></div>
<div style="left:1078.2326801152738px;top:441.2px;width:3px;height:25.8px;background:#262626;"></div>
<div class="g" style="left:1061.2326801152738px;top:459.2px;width:16px;height:7.8px"></div>
<div style="left:1082.9929106628242px;top:439.2px;width:16px;height:27.8px;background:#202020;"></div>
<div style="left:1099.9929106628242px;top:441.2px;width:3px;height:25.8px;background:#262626;"></div>
<div class="g" style="left:1082.9929106628242px;top:449.7px;width:16px;height:17.3px"></div>
<div style="left:1105.2591930835736px;top:439.2px;width:16px;height:27.8px;background:#202020;"></div>
<div style="left:1122.2591930835736px;top:441.2px;width:3px;height:25.8px;background:#262626;"></div>
<div class="g" style="left:1105.2591930835736px;top:459.2px;width:16px;height:7.8px"></div>
<div style="left:1127.1206340057638px;top:439.2px;width:16px;height:27.8px;background:#202020;"></div>
<div class="g" style="left:1127.1206340057638px;top:454.2px;width:16px;height:12.8px"></div>
<div class="t" style="left:1062.8px;top:468.4px;font-size:6.2px;color:#f2f2f2;">Speaker32</div>
<div style="left:1061.2326801152738px;top:479.0px;width:16px;height:27.8px;background:#202020;"></div>
<div style="left:1078.2326801152738px;top:481.0px;width:3px;height:25.8px;background:#262626;"></div>
<div class="g" style="left:1061.2326801152738px;top:499.0px;width:16px;height:7.8px"></div>
<div style="left:1082.9929106628242px;top:479.0px;width:16px;height:27.8px;background:#202020;"></div>
<div style="left:1099.9929106628242px;top:481.0px;width:3px;height:25.8px;background:#262626;"></div>
<div class="g" style="left:1082.9929106628242px;top:489.5px;width:16px;height:17.3px"></div>
<div style="left:1105.2591930835736px;top:479.0px;width:16px;height:27.8px;background:#202020;"></div>
<div style="left:1122.2591930835736px;top:481.0px;width:3px;height:25.8px;background:#262626;"></div>
<div class="g" style="left:1105.2591930835736px;top:499.0px;width:16px;height:7.8px"></div>
<div style="left:1127.1206340057638px;top:479.0px;width:16px;height:27.8px;background:#202020;"></div>
<div class="g" style="left:1127.1206340057638px;top:494.0px;width:16px;height:12.8px"></div>
<div class="t" style="left:1062.8px;top:508.19999999999993px;font-size:6.2px;color:#f2f2f2;">Speaker33</div>
<div style="left:1061.2326801152738px;top:518.8px;width:16px;height:27.8px;background:#202020;"></div>
<div style="left:1078.2326801152738px;top:520.8px;width:3px;height:25.8px;background:#262626;"></div>
<div class="g" style="left:1061.2326801152738px;top:538.8px;width:16px;height:7.8px"></div>
<div style="left:1082.9929106628242px;top:518.8px;width:16px;height:27.8px;background:#202020;"></div>
<div style="left:1099.9929106628242px;top:520.8px;width:3px;height:25.8px;background:#262626;"></div>
<div class="g" style="left:1082.9929106628242px;top:529.3px;width:16px;height:17.3px"></div>
<div style="left:1105.2591930835736px;top:518.8px;width:16px;height:27.8px;background:#202020;"></div>
<div style="left:1122.2591930835736px;top:520.8px;width:3px;height:25.8px;background:#262626;"></div>
<div class="g" style="left:1105.2591930835736px;top:538.8px;width:16px;height:7.8px"></div>
<div style="left:1127.1206340057638px;top:518.8px;width:16px;height:27.8px;background:#202020;"></div>
<div class="g" style="left:1127.1206340057638px;top:533.8px;width:16px;height:12.8px"></div>
<div style="left:1158px;top:70px;width:87.3px;height:358.2px;background:#1a1a1a;"></div>
<div class="t" style="left:1162.3px;top:70.4px;font-size:6.2px;color:#f2f2f2;">Speaker34</div>
<div style="left:1160.7171181556196px;top:81.0px;width:16px;height:27.8px;background:#202020;"></div>
<div style="left:1177.7171181556196px;top:83.0px;width:3px;height:25.8px;background:#262626;"></div>
<div class="g" style="left:1160.7171181556196px;top:101.0px;width:16px;height:7.8px"></div>
<div style="left:1182.3534293948126px;top:81.0px;width:16px;height:27.8px;background:#202020;"></div>
<div style="left:1199.3534293948126px;top:83.0px;width:3px;height:25.8px;background:#262626;"></div>
<div class="g" style="left:1182.3534293948126px;top:91.5px;width:16px;height:17.3px"></div>
<div style="left:1204.4929106628242px;top:81.0px;width:16px;height:27.8px;background:#202020;"></div>
<div style="left:1221.4929106628242px;top:83.0px;width:3px;height:25.8px;background:#262626;"></div>
<div class="g" style="left:1204.4929106628242px;top:101.0px;width:16px;height:7.8px"></div>
<div style="left:1226.229855907781px;top:81.0px;width:16px;height:27.8px;background:#202020;"></div>
<div class="g" style="left:1226.229855907781px;top:96.0px;width:16px;height:12.8px"></div>
<div class="t" style="left:1162.3px;top:110.2px;font-size:6.2px;color:#f2f2f2;">Speaker35</div>
<div style="left:1160.7171181556196px;top:120.8px;width:16px;height:27.8px;background:#202020;"></div>
<div style="left:1177.7171181556196px;top:122.8px;width:3px;height:25.8px;background:#262626;"></div>
<div class="g" style="left:1160.7171181556196px;top:140.79999999999998px;width:16px;height:7.8px"></div>
<div style="left:1182.3534293948126px;top:120.8px;width:16px;height:27.8px;background:#202020;"></div>
<div style="left:1199.3534293948126px;top:122.8px;width:3px;height:25.8px;background:#262626;"></div>
<div class="g" style="left:1182.3534293948126px;top:131.29999999999998px;width:16px;height:17.3px"></div>
<div style="left:1204.4929106628242px;top:120.8px;width:16px;height:27.8px;background:#202020;"></div>
<div style="left:1221.4929106628242px;top:122.8px;width:3px;height:25.8px;background:#262626;"></div>
<div class="g" style="left:1204.4929106628242px;top:140.79999999999998px;width:16px;height:7.8px"></div>
<div style="left:1226.229855907781px;top:120.8px;width:16px;height:27.8px;background:#202020;"></div>
<div class="g" style="left:1226.229855907781px;top:135.79999999999998px;width:16px;height:12.8px"></div>
<div class="t" style="left:1162.3px;top:150.0px;font-size:6.2px;color:#f2f2f2;">Speaker36</div>
<div style="left:1160.7171181556196px;top:160.6px;width:16px;height:27.8px;background:#202020;"></div>
<div style="left:1177.7171181556196px;top:162.6px;width:3px;height:25.8px;background:#262626;"></div>
<div class="g" style="left:1160.7171181556196px;top:180.59999999999997px;width:16px;height:7.8px"></div>
<div style="left:1182.3534293948126px;top:160.6px;width:16px;height:27.8px;background:#202020;"></div>
<div style="left:1199.3534293948126px;top:162.6px;width:3px;height:25.8px;background:#262626;"></div>
<div class="g" style="left:1182.3534293948126px;top:171.09999999999997px;width:16px;height:17.3px"></div>
<div style="left:1204.4929106628242px;top:160.6px;width:16px;height:27.8px;background:#202020;"></div>
<div style="left:1221.4929106628242px;top:162.6px;width:3px;height:25.8px;background:#262626;"></div>
<div class="g" style="left:1204.4929106628242px;top:180.59999999999997px;width:16px;height:7.8px"></div>
<div style="left:1226.229855907781px;top:160.6px;width:16px;height:27.8px;background:#202020;"></div>
<div class="g" style="left:1226.229855907781px;top:175.59999999999997px;width:16px;height:12.8px"></div>
<div class="t" style="left:1162.3px;top:189.79999999999998px;font-size:6.2px;color:#f2f2f2;">Speaker37</div>
<div style="left:1160.7171181556196px;top:200.39999999999998px;width:16px;height:27.8px;background:#202020;"></div>
<div style="left:1177.7171181556196px;top:202.39999999999998px;width:3px;height:25.8px;background:#262626;"></div>
<div class="g" style="left:1160.7171181556196px;top:220.39999999999998px;width:16px;height:7.8px"></div>
<div style="left:1182.3534293948126px;top:200.39999999999998px;width:16px;height:27.8px;background:#202020;"></div>
<div style="left:1199.3534293948126px;top:202.39999999999998px;width:3px;height:25.8px;background:#262626;"></div>
<div class="g" style="left:1182.3534293948126px;top:210.89999999999998px;width:16px;height:17.3px"></div>
<div style="left:1204.4929106628242px;top:200.39999999999998px;width:16px;height:27.8px;background:#202020;"></div>
<div style="left:1221.4929106628242px;top:202.39999999999998px;width:3px;height:25.8px;background:#262626;"></div>
<div class="g" style="left:1204.4929106628242px;top:220.39999999999998px;width:16px;height:7.8px"></div>
<div style="left:1226.229855907781px;top:200.39999999999998px;width:16px;height:27.8px;background:#202020;"></div>
<div class="g" style="left:1226.229855907781px;top:215.39999999999998px;width:16px;height:12.8px"></div>
<div class="t" style="left:1162.3px;top:229.6px;font-size:6.2px;color:#f2f2f2;">Speaker38</div>
<div style="left:1160.7171181556196px;top:240.2px;width:16px;height:27.8px;background:#202020;"></div>
<div style="left:1177.7171181556196px;top:242.2px;width:3px;height:25.8px;background:#262626;"></div>
<div class="g" style="left:1160.7171181556196px;top:260.2px;width:16px;height:7.8px"></div>
<div style="left:1182.3534293948126px;top:240.2px;width:16px;height:27.8px;background:#202020;"></div>
<div style="left:1199.3534293948126px;top:242.2px;width:3px;height:25.8px;background:#262626;"></div>
<div class="g" style="left:1182.3534293948126px;top:250.7px;width:16px;height:17.3px"></div>
<div style="left:1204.4929106628242px;top:240.2px;width:16px;height:27.8px;background:#202020;"></div>
<div style="left:1221.4929106628242px;top:242.2px;width:3px;height:25.8px;background:#262626;"></div>
<div class="g" style="left:1204.4929106628242px;top:260.2px;width:16px;height:7.8px"></div>
<div style="left:1226.229855907781px;top:240.2px;width:16px;height:27.8px;background:#202020;"></div>
<div class="g" style="left:1226.229855907781px;top:255.2px;width:16px;height:12.8px"></div>
<div class="t" style="left:1162.3px;top:269.4px;font-size:6.2px;color:#f2f2f2;">Speaker39</div>
<div style="left:1160.7171181556196px;top:280.0px;width:16px;height:27.8px;background:#202020;"></div>
<div style="left:1177.7171181556196px;top:282.0px;width:3px;height:25.8px;background:#262626;"></div>
<div class="g" style="left:1160.7171181556196px;top:300.0px;width:16px;height:7.8px"></div>
<div style="left:1182.3534293948126px;top:280.0px;width:16px;height:27.8px;background:#202020;"></div>
<div style="left:1199.3534293948126px;top:282.0px;width:3px;height:25.8px;background:#262626;"></div>
<div class="g" style="left:1182.3534293948126px;top:290.5px;width:16px;height:17.3px"></div>
<div style="left:1204.4929106628242px;top:280.0px;width:16px;height:27.8px;background:#202020;"></div>
<div style="left:1221.4929106628242px;top:282.0px;width:3px;height:25.8px;background:#262626;"></div>
<div class="g" style="left:1204.4929106628242px;top:300.0px;width:16px;height:7.8px"></div>
<div style="left:1226.229855907781px;top:280.0px;width:16px;height:27.8px;background:#202020;"></div>
<div class="g" style="left:1226.229855907781px;top:295.0px;width:16px;height:12.8px"></div>
<div class="t" style="left:1162.3px;top:309.19999999999993px;font-size:6.2px;color:#f2f2f2;">Speaker40</div>
<div style="left:1160.7171181556196px;top:319.79999999999995px;width:16px;height:27.8px;background:#202020;"></div>
<div style="left:1177.7171181556196px;top:321.79999999999995px;width:3px;height:25.8px;background:#262626;"></div>
<div class="g" style="left:1160.7171181556196px;top:339.79999999999995px;width:16px;height:7.8px"></div>
<div style="left:1182.3534293948126px;top:319.79999999999995px;width:16px;height:27.8px;background:#202020;"></div>
<div style="left:1199.3534293948126px;top:321.79999999999995px;width:3px;height:25.8px;background:#262626;"></div>
<div class="g" style="left:1182.3534293948126px;top:330.29999999999995px;width:16px;height:17.3px"></div>
<div style="left:1204.4929106628242px;top:319.79999999999995px;width:16px;height:27.8px;background:#202020;"></div>
<div style="left:1221.4929106628242px;top:321.79999999999995px;width:3px;height:25.8px;background:#262626;"></div>
<div class="g" style="left:1204.4929106628242px;top:339.79999999999995px;width:16px;height:7.8px"></div>
<div style="left:1226.229855907781px;top:319.79999999999995px;width:16px;height:27.8px;background:#202020;"></div>
<div class="g" style="left:1226.229855907781px;top:334.79999999999995px;width:16px;height:12.8px"></div>
<div style="left:1202.5px;top:320.59999999999997px;width:43px;height:27.8px;background:rgba(125,125,125,.55);border:1px solid #b4b4b4;box-sizing:border-box"></div>
<div class="t" style="left:1162.3px;top:348.99999999999994px;font-size:6.2px;color:#f2f2f2;">Speaker41</div>
<div style="left:1160.7171181556196px;top:359.59999999999997px;width:16px;height:27.8px;background:#202020;"></div>
<div style="left:1177.7171181556196px;top:361.59999999999997px;width:3px;height:25.8px;background:#262626;"></div>
<div class="g" style="left:1160.7171181556196px;top:379.59999999999997px;width:16px;height:7.8px"></div>
<div style="left:1182.3534293948126px;top:359.59999999999997px;width:16px;height:27.8px;background:#202020;"></div>
<div style="left:1199.3534293948126px;top:361.59999999999997px;width:3px;height:25.8px;background:#262626;"></div>
<div class="g" style="left:1182.3534293948126px;top:370.09999999999997px;width:16px;height:17.3px"></div>
<div style="left:1204.4929106628242px;top:359.59999999999997px;width:16px;height:27.8px;background:#202020;"></div>
<div style="left:1221.4929106628242px;top:361.59999999999997px;width:3px;height:25.8px;background:#262626;"></div>
<div class="g" style="left:1204.4929106628242px;top:379.59999999999997px;width:16px;height:7.8px"></div>
<div style="left:1226.229855907781px;top:359.59999999999997px;width:16px;height:27.8px;background:#202020;"></div>
<div class="g" style="left:1226.229855907781px;top:374.59999999999997px;width:16px;height:12.8px"></div>
<div style="left:1202.5px;top:360.4px;width:43px;height:27.8px;background:rgba(125,125,125,.55);border:1px solid #b4b4b4;box-sizing:border-box"></div>
<div class="t" style="left:1162.3px;top:388.79999999999995px;font-size:6.2px;color:#f2f2f2;">Speaker42</div>
<div style="left:1160.7171181556196px;top:399.4px;width:16px;height:27.8px;background:#202020;"></div>
<div style="left:1177.7171181556196px;top:401.4px;width:3px;height:25.8px;background:#262626;"></div>
<div class="g" style="left:1160.7171181556196px;top:419.4px;width:16px;height:7.8px"></div>
<div style="left:1182.3534293948126px;top:399.4px;width:16px;height:27.8px;background:#202020;"></div>
<div style="left:1199.3534293948126px;top:401.4px;width:3px;height:25.8px;background:#262626;"></div>
<div class="g" style="left:1182.3534293948126px;top:409.9px;width:16px;height:17.3px"></div>
<div style="left:1204.4929106628242px;top:399.4px;width:16px;height:27.8px;background:#202020;"></div>
<div style="left:1221.4929106628242px;top:401.4px;width:3px;height:25.8px;background:#262626;"></div>
<div class="g" style="left:1204.4929106628242px;top:419.4px;width:16px;height:7.8px"></div>
<div style="left:1226.229855907781px;top:399.4px;width:16px;height:27.8px;background:#202020;"></div>
<div class="g" style="left:1226.229855907781px;top:414.4px;width:16px;height:12.8px"></div>
<div style="left:1202.5px;top:400.2px;width:43px;height:27.8px;background:rgba(125,125,125,.55);border:1px solid #b4b4b4;box-sizing:border-box"></div>
<div style="left:531px;top:552.5px;width:88px;height:39.5px;background:#1a1a1a;"></div>
<div class="t" style="left:536.5px;top:552.0px;font-size:6.2px;color:#f2f2f2;">Speaker59</div>
<div style="left:535px;top:565.0px;width:17px;height:26.5px;background:#1e1e1e;box-shadow:inset 0 0 0 1px #333"></div>
<div style="left:552.5px;top:565.5px;width:3px;height:26px;background:#2a2a2a;"></div>
<div class="g" style="left:535px;top:583.0px;width:17px;height:8.5px"></div>
<div style="left:535px;top:564.0px;width:16px;height:1px;background:#b89a3c;"></div>
<div style="left:556px;top:565.5px;width:17px;height:26px;background:#1e1e1e;"></div>
<div class="g" style="left:556px;top:572.5px;width:17px;height:19px"></div>
<div style="left:578px;top:565.0px;width:17px;height:26.5px;background:#1e1e1e;box-shadow:inset 0 0 0 1px #333"></div>
<div style="left:595.5px;top:565.5px;width:3px;height:26px;background:#2a2a2a;"></div>
<div class="g" style="left:578px;top:583.0px;width:17px;height:8.5px"></div>
<div style="left:578px;top:564.0px;width:16px;height:1px;background:#b89a3c;"></div>
<div style="left:599px;top:565.5px;width:17px;height:26px;background:#1e1e1e;"></div>
<div class="g" style="left:599px;top:580.0px;width:17px;height:11.5px"></div>
<div style="left:651px;top:552.5px;width:88px;height:39.5px;background:#1a1a1a;"></div>
<div class="t" style="left:656.5px;top:552.0px;font-size:6.2px;color:#f2f2f2;">Speaker61</div>
<div style="left:655px;top:565.0px;width:17px;height:26.5px;background:#1e1e1e;box-shadow:inset 0 0 0 1px #333"></div>
<div style="left:672.5px;top:565.5px;width:3px;height:26px;background:#2a2a2a;"></div>
<div class="g" style="left:655px;top:583.0px;width:17px;height:8.5px"></div>
<div style="left:655px;top:564.0px;width:16px;height:1px;background:#b89a3c;"></div>
<div style="left:676px;top:565.5px;width:17px;height:26px;background:#1e1e1e;"></div>
<div class="g" style="left:676px;top:572.5px;width:17px;height:19px"></div>
<div style="left:698px;top:565.0px;width:17px;height:26.5px;background:#1e1e1e;box-shadow:inset 0 0 0 1px #333"></div>
<div style="left:715.5px;top:565.5px;width:3px;height:26px;background:#2a2a2a;"></div>
<div class="g" style="left:698px;top:583.0px;width:17px;height:8.5px"></div>
<div style="left:698px;top:564.0px;width:16px;height:1px;background:#b89a3c;"></div>
<div style="left:719px;top:565.5px;width:17px;height:26px;background:#1e1e1e;"></div>
<div class="g" style="left:719px;top:580.0px;width:17px;height:11.5px"></div>
<div style="left:771px;top:552.5px;width:88px;height:39.5px;background:#1a1a1a;"></div>
<div class="t" style="left:776.5px;top:552.0px;font-size:6.2px;color:#f2f2f2;">Speaker62</div>
<div style="left:775px;top:565.0px;width:17px;height:26.5px;background:#1e1e1e;box-shadow:inset 0 0 0 1px #333"></div>
<div style="left:792.5px;top:565.5px;width:3px;height:26px;background:#2a2a2a;"></div>
<div class="g" style="left:775px;top:583.0px;width:17px;height:8.5px"></div>
<div style="left:775px;top:564.0px;width:16px;height:1px;background:#b89a3c;"></div>
<div style="left:796px;top:565.5px;width:17px;height:26px;background:#1e1e1e;"></div>
<div class="g" style="left:796px;top:572.5px;width:17px;height:19px"></div>
<div style="left:818px;top:565.0px;width:17px;height:26.5px;background:#1e1e1e;box-shadow:inset 0 0 0 1px #333"></div>
<div style="left:835.5px;top:565.5px;width:3px;height:26px;background:#2a2a2a;"></div>
<div class="g" style="left:818px;top:583.0px;width:17px;height:8.5px"></div>
<div style="left:818px;top:564.0px;width:16px;height:1px;background:#b89a3c;"></div>
<div style="left:839px;top:565.5px;width:17px;height:26px;background:#1e1e1e;"></div>
<div class="g" style="left:839px;top:580.0px;width:17px;height:11.5px"></div>
<div style="left:891px;top:552.5px;width:88px;height:39.5px;background:#1a1a1a;"></div>
<div class="t" style="left:896.5px;top:552.0px;font-size:6.2px;color:#f2f2f2;">Speaker60</div>
<div style="left:895px;top:565.0px;width:17px;height:26.5px;background:#1e1e1e;box-shadow:inset 0 0 0 1px #333"></div>
<div style="left:912.5px;top:565.5px;width:3px;height:26px;background:#2a2a2a;"></div>
<div class="g" style="left:895px;top:583.0px;width:17px;height:8.5px"></div>
<div style="left:895px;top:564.0px;width:16px;height:1px;background:#b89a3c;"></div>
<div style="left:916px;top:565.5px;width:17px;height:26px;background:#1e1e1e;"></div>
<div class="g" style="left:916px;top:572.5px;width:17px;height:19px"></div>
<div style="left:938px;top:565.0px;width:17px;height:26.5px;background:#1e1e1e;box-shadow:inset 0 0 0 1px #333"></div>
<div style="left:955.5px;top:565.5px;width:3px;height:26px;background:#2a2a2a;"></div>
<div class="g" style="left:938px;top:583.0px;width:17px;height:8.5px"></div>
<div style="left:938px;top:564.0px;width:16px;height:1px;background:#b89a3c;"></div>
<div style="left:959px;top:565.5px;width:17px;height:26px;background:#1e1e1e;"></div>
<div class="g" style="left:959px;top:580.0px;width:17px;height:11.5px"></div>
<div style="left:180.3px;top:647.5px;width:1150.1px;height:119.2px;background:#1a1a1a;"></div>
<div class="t" style="left:185.3px;top:648.0px;font-size:6.2px;color:#f2f2f2;">Speaker44</div>
<div style="left:181.8px;top:659.5px;width:8px;height:47px;background:#262626;"></div>
<div style="left:242.3px;top:659.5px;width:18px;height:47px;background:#282828;"></div>
<div style="left:314.8px;top:659.5px;width:9px;height:47px;background:#262626;"></div>
<div style="left:189.8px;top:683.5px;width:53px;height:1px;background:#2e2e2e;"></div>
<div class="g" style="left:189.60000000000002px;top:689.7px;width:53px;height:17px"></div>
<div class="g" style="left:260.4px;top:689.7px;width:54px;height:17px"></div>
<div class="t" style="left:329.0px;top:648.0px;font-size:6.2px;color:#f2f2f2;">Speaker45</div>
<div style="left:325.5px;top:659.5px;width:8px;height:47px;background:#262626;"></div>
<div style="left:386.0px;top:659.5px;width:18px;height:47px;background:#282828;"></div>
<div style="left:458.5px;top:659.5px;width:9px;height:47px;background:#262626;"></div>
<div style="left:333.5px;top:683.5px;width:53px;height:1px;background:#2e2e2e;"></div>
<div class="g" style="left:333.3px;top:689.7px;width:53px;height:17px"></div>
<div class="g" style="left:404.1px;top:689.7px;width:54px;height:17px"></div>
<div class="t" style="left:472.7px;top:648.0px;font-size:6.2px;color:#f2f2f2;">Speaker46</div>
<div style="left:469.2px;top:659.5px;width:8px;height:47px;background:#262626;"></div>
<div style="left:529.7px;top:659.5px;width:18px;height:47px;background:#282828;"></div>
<div style="left:602.2px;top:659.5px;width:9px;height:47px;background:#262626;"></div>
<div style="left:477.2px;top:683.5px;width:53px;height:1px;background:#2e2e2e;"></div>
<div class="g" style="left:477.0px;top:689.7px;width:53px;height:17px"></div>
<div class="g" style="left:547.8px;top:689.7px;width:54px;height:17px"></div>
<div class="t" style="left:616.4px;top:648.0px;font-size:6.2px;color:#f2f2f2;">Speaker47</div>
<div style="left:612.9px;top:659.5px;width:8px;height:47px;background:#262626;"></div>
<div style="left:673.4px;top:659.5px;width:18px;height:47px;background:#282828;"></div>
<div style="left:745.9px;top:659.5px;width:9px;height:47px;background:#262626;"></div>
<div style="left:620.9px;top:683.5px;width:53px;height:1px;background:#2e2e2e;"></div>
<div class="g" style="left:620.6999999999999px;top:689.7px;width:53px;height:17px"></div>
<div class="g" style="left:691.5px;top:689.7px;width:54px;height:17px"></div>
<div class="t" style="left:760.0999999999999px;top:648.0px;font-size:6.2px;color:#f2f2f2;">Speaker48</div>
<div style="left:756.5999999999999px;top:659.5px;width:8px;height:47px;background:#262626;"></div>
<div style="left:817.0999999999999px;top:659.5px;width:18px;height:47px;background:#282828;"></div>
<div style="left:889.5999999999999px;top:659.5px;width:9px;height:47px;background:#262626;"></div>
<div style="left:764.5999999999999px;top:683.5px;width:53px;height:1px;background:#2e2e2e;"></div>
<div class="g" style="left:764.3999999999999px;top:689.7px;width:53px;height:17px"></div>
<div class="g" style="left:835.1999999999999px;top:689.7px;width:54px;height:17px"></div>
<div class="t" style="left:903.8px;top:648.0px;font-size:6.2px;color:#f2f2f2;">Speaker49</div>
<div style="left:900.3px;top:659.5px;width:8px;height:47px;background:#262626;"></div>
<div style="left:960.8px;top:659.5px;width:18px;height:47px;background:#282828;"></div>
<div style="left:1033.3px;top:659.5px;width:9px;height:47px;background:#262626;"></div>
<div style="left:908.3px;top:683.5px;width:53px;height:1px;background:#2e2e2e;"></div>
<div class="g" style="left:908.0999999999999px;top:689.7px;width:53px;height:17px"></div>
<div class="g" style="left:978.9px;top:689.7px;width:54px;height:17px"></div>
<div class="t" style="left:1047.5px;top:648.0px;font-size:6.2px;color:#f2f2f2;">Speaker50</div>
<div style="left:1044.0px;top:659.5px;width:8px;height:47px;background:#262626;"></div>
<div style="left:1104.5px;top:659.5px;width:18px;height:47px;background:#282828;"></div>
<div style="left:1177.0px;top:659.5px;width:9px;height:47px;background:#262626;"></div>
<div style="left:1052.0px;top:683.5px;width:53px;height:1px;background:#2e2e2e;"></div>
<div class="g" style="left:1051.8px;top:689.7px;width:53px;height:17px"></div>
<div class="g" style="left:1122.6px;top:689.7px;width:54px;height:17px"></div>
<div class="t" style="left:1191.1999999999998px;top:648.0px;font-size:6.2px;color:#f2f2f2;">Speaker51</div>
<div style="left:1187.6999999999998px;top:659.5px;width:8px;height:47px;background:#262626;"></div>
<div style="left:1248.1999999999998px;top:659.5px;width:18px;height:47px;background:#282828;"></div>
<div style="left:1320.6999999999998px;top:659.5px;width:9px;height:47px;background:#262626;"></div>
<div style="left:1195.6999999999998px;top:683.5px;width:53px;height:1px;background:#2e2e2e;"></div>
<div class="g" style="left:1195.4999999999998px;top:689.7px;width:53px;height:17px"></div>
<div class="g" style="left:1266.2999999999997px;top:689.7px;width:54px;height:17px"></div>
<div class="t" style="left:185.3px;top:707.6px;font-size:6.2px;color:#f2f2f2;">Speaker52</div>
<div style="left:181.8px;top:719.1px;width:8px;height:47px;background:#262626;"></div>
<div style="left:242.3px;top:719.1px;width:18px;height:47px;background:#282828;"></div>
<div style="left:314.8px;top:719.1px;width:9px;height:47px;background:#262626;"></div>
<div style="left:189.8px;top:743.1px;width:53px;height:1px;background:#2e2e2e;"></div>
<div class="g" style="left:189.60000000000002px;top:749.3000000000001px;width:53px;height:17px"></div>
<div class="g" style="left:260.4px;top:749.3000000000001px;width:54px;height:17px"></div>
<div class="t" style="left:329.0px;top:707.6px;font-size:6.2px;color:#f2f2f2;">Speaker53</div>
<div style="left:325.5px;top:719.1px;width:8px;height:47px;background:#262626;"></div>
<div style="left:386.0px;top:719.1px;width:18px;height:47px;background:#282828;"></div>
<div style="left:458.5px;top:719.1px;width:9px;height:47px;background:#262626;"></div>
<div style="left:333.5px;top:743.1px;width:53px;height:1px;background:#2e2e2e;"></div>
<div class="g" style="left:333.3px;top:749.3000000000001px;width:53px;height:17px"></div>
<div class="g" style="left:404.1px;top:749.3000000000001px;width:54px;height:17px"></div>
<div class="t" style="left:472.7px;top:707.6px;font-size:6.2px;color:#f2f2f2;">Speaker54</div>
<div style="left:469.2px;top:719.1px;width:8px;height:47px;background:#262626;"></div>
<div style="left:529.7px;top:719.1px;width:18px;height:47px;background:#282828;"></div>
<div style="left:602.2px;top:719.1px;width:9px;height:47px;background:#262626;"></div>
<div style="left:477.2px;top:743.1px;width:53px;height:1px;background:#2e2e2e;"></div>
<div class="g" style="left:477.0px;top:749.3000000000001px;width:53px;height:17px"></div>
<div class="g" style="left:547.8px;top:749.3000000000001px;width:54px;height:17px"></div>
<div class="t" style="left:616.4px;top:707.6px;font-size:6.2px;color:#f2f2f2;">Speaker55</div>
<div style="left:612.9px;top:719.1px;width:8px;height:47px;background:#262626;"></div>
<div style="left:673.4px;top:719.1px;width:18px;height:47px;background:#282828;"></div>
<div style="left:745.9px;top:719.1px;width:9px;height:47px;background:#262626;"></div>
<div style="left:620.9px;top:743.1px;width:53px;height:1px;background:#2e2e2e;"></div>
<div class="g" style="left:620.6999999999999px;top:749.3000000000001px;width:53px;height:17px"></div>
<div class="g" style="left:691.5px;top:749.3000000000001px;width:54px;height:17px"></div>
<div class="t" style="left:760.0999999999999px;top:707.6px;font-size:6.2px;color:#f2f2f2;">Speaker56</div>
<div style="left:756.5999999999999px;top:719.1px;width:8px;height:47px;background:#262626;"></div>
<div style="left:817.0999999999999px;top:719.1px;width:18px;height:47px;background:#282828;"></div>
<div style="left:889.5999999999999px;top:719.1px;width:9px;height:47px;background:#262626;"></div>
<div style="left:764.5999999999999px;top:743.1px;width:53px;height:1px;background:#2e2e2e;"></div>
<div class="g" style="left:764.3999999999999px;top:749.3000000000001px;width:53px;height:17px"></div>
<div class="g" style="left:835.1999999999999px;top:749.3000000000001px;width:54px;height:17px"></div>
<div class="t" style="left:903.8px;top:707.6px;font-size:6.2px;color:#f2f2f2;">Speaker57</div>
<div style="left:900.3px;top:719.1px;width:8px;height:47px;background:#262626;"></div>
<div style="left:960.8px;top:719.1px;width:18px;height:47px;background:#282828;"></div>
<div style="left:1033.3px;top:719.1px;width:9px;height:47px;background:#262626;"></div>
<div style="left:908.3px;top:743.1px;width:53px;height:1px;background:#2e2e2e;"></div>
<div class="g" style="left:908.0999999999999px;top:749.3000000000001px;width:53px;height:17px"></div>
<div class="g" style="left:978.9px;top:749.3000000000001px;width:54px;height:17px"></div>
<div class="t" style="left:1047.5px;top:707.6px;font-size:6.2px;color:#f2f2f2;">Speaker58</div>
<div style="left:1044.0px;top:719.1px;width:8px;height:47px;background:#262626;"></div>
<div style="left:1104.5px;top:719.1px;width:18px;height:47px;background:#282828;"></div>
<div style="left:1177.0px;top:719.1px;width:9px;height:47px;background:#262626;"></div>
<div style="left:1052.0px;top:743.1px;width:53px;height:1px;background:#2e2e2e;"></div>
<div class="g" style="left:1051.8px;top:749.3000000000001px;width:53px;height:17px"></div>
<div class="g" style="left:1122.6px;top:749.3000000000001px;width:54px;height:17px"></div>
<div class="t" style="left:1191.1999999999998px;top:707.6px;font-size:6.2px;color:#f2f2f2;">Speaker59</div>
<div style="left:1187.6999999999998px;top:719.1px;width:8px;height:47px;background:#262626;"></div>
<div style="left:1248.1999999999998px;top:719.1px;width:18px;height:47px;background:#282828;"></div>
<div style="left:1320.6999999999998px;top:719.1px;width:9px;height:47px;background:#262626;"></div>
<div style="left:1195.6999999999998px;top:743.1px;width:53px;height:1px;background:#2e2e2e;"></div>
<div class="g" style="left:1195.4999999999998px;top:749.3000000000001px;width:53px;height:17px"></div>
<div class="g" style="left:1266.2999999999997px;top:749.3000000000001px;width:54px;height:17px"></div>
<div style="left:146.5px;top:125.5px;width:89.5px;height:313.7px;background:#2a2a2a;box-shadow:0 0 0 1px #202020"></div>
<div style="left:146.5px;top:125.5px;width:89.5px;height:13px;background:#1462ac;"></div>
<div class="t" style="left:152.0px;top:126.0px;font-size:6.2px;color:#fff;font-weight:bold">Group - Metering</div>
<svg style="left:225.5px;top:128.0px" width="8" height="8" viewBox="0 0 8 8"><path d="M1 1 L7 7 M7 1 L1 7" stroke="#fff" stroke-width="1.3"/></svg>
<div class="t c" style="left:124px;top:148px;font-size:6.8px;color:#fff;font-weight:bold">SD</div>
<div class="t c" style="left:137.3px;top:148px;font-size:6.8px;color:#fff;font-weight:bold">LF</div>
<div class="t c" style="left:150.8px;top:148px;font-size:6.8px;color:#fff;font-weight:bold">HF</div>
<div class="t c" style="left:105px;top:165.5px;font-size:6.2px;color:#fff;font-weight:bold">IN</div>
<div class="t c" style="left:105px;top:234.5px;font-size:6.2px;color:#fff;font-weight:bold">OUT</div>
<div class="t c" style="left:104.5px;top:366.5px;font-size:6.2px;color:#fff;font-weight:bold">GR</div>
<div style="left:180px;top:167px;width:7.5px;height:63.5px;background:#1a1a1a;"></div>
<div style="left:180px;top:236px;width:7.5px;height:126px;background:#1a1a1a;"></div>
<div style="left:180px;top:365.5px;width:7.5px;height:65.5px;background:#1a1a1a;"></div>
<div style="left:193.5px;top:167px;width:7.5px;height:63.5px;background:#1a1a1a;"></div>
<div style="left:193.5px;top:236px;width:7.5px;height:126px;background:#1a1a1a;"></div>
<div style="left:193.5px;top:365.5px;width:7.5px;height:65.5px;background:#1a1a1a;"></div>
<div style="left:206.8px;top:167px;width:7.5px;height:63.5px;background:#1a1a1a;"></div>
<div style="left:206.8px;top:236px;width:7.5px;height:126px;background:#1a1a1a;"></div>
<div style="left:206.8px;top:365.5px;width:7.5px;height:65.5px;background:#1a1a1a;"></div>
<div class="g" style="left:180px;top:182.5px;width:7.5px;height:48px"></div>
<div class="g" style="left:193.5px;top:189px;width:7.5px;height:41.5px"></div>
<div class="g" style="left:206.8px;top:189px;width:7.5px;height:41.5px"></div>
<div class="g" style="left:180px;top:316px;width:7.5px;height:46px"></div>
<div class="g" style="left:193.5px;top:272px;width:7.5px;height:90px"></div>
<div class="g" style="left:206.8px;top:294.5px;width:7.5px;height:67.5px"></div>
<div style="left:193.5px;top:368.5px;width:7.5px;height:3.5px;background:#f0e6a0"></div>
<div style="left:206.8px;top:368.5px;width:7.5px;height:3.5px;background:#f0e6a0"></div>
<div style="left:221px;top:167px;width:3px;height:0.8px;background:#777;"></div>
<div class="t" style="left:193px;top:161.5px;width:40px;text-align:right;font-size:4.6px;color:#aaa">0</div>
<div style="left:221px;top:188px;width:3px;height:0.8px;background:#777;"></div>
<div class="t" style="left:193px;top:182.5px;width:40px;text-align:right;font-size:4.6px;color:#aaa">-20</div>
<div style="left:221px;top:209px;width:3px;height:0.8px;background:#777;"></div>
<div class="t" style="left:193px;top:203.5px;width:40px;text-align:right;font-size:4.6px;color:#aaa">-40</div>
<div style="left:221px;top:230.4px;width:3px;height:0.8px;background:#777;"></div>
<div class="t" style="left:193px;top:224.9px;width:40px;text-align:right;font-size:4.6px;color:#aaa">-60</div>
<div style="left:221px;top:241px;width:3px;height:0.8px;background:#777;"></div>
<div class="t" style="left:193px;top:235.5px;width:40px;text-align:right;font-size:4.6px;color:#aaa">0</div>
<div style="left:221px;top:265.5px;width:3px;height:0.8px;background:#777;"></div>
<div class="t" style="left:193px;top:260.0px;width:40px;text-align:right;font-size:4.6px;color:#aaa">-10</div>
<div style="left:221px;top:289.6px;width:3px;height:0.8px;background:#777;"></div>
<div class="t" style="left:193px;top:284.1px;width:40px;text-align:right;font-size:4.6px;color:#aaa">-20</div>
<div style="left:221px;top:313.5px;width:3px;height:0.8px;background:#777;"></div>
<div class="t" style="left:193px;top:308.0px;width:40px;text-align:right;font-size:4.6px;color:#aaa">-30</div>
<div style="left:221px;top:337.7px;width:3px;height:0.8px;background:#777;"></div>
<div class="t" style="left:193px;top:332.2px;width:40px;text-align:right;font-size:4.6px;color:#aaa">-40</div>
<div style="left:221px;top:361.7px;width:3px;height:0.8px;background:#777;"></div>
<div class="t" style="left:193px;top:356.2px;width:40px;text-align:right;font-size:4.6px;color:#aaa">-50</div>
<div style="left:221px;top:369.2px;width:3px;height:0.8px;background:#777;"></div>
<div class="t" style="left:193px;top:363.7px;width:40px;text-align:right;font-size:4.6px;color:#aaa">0</div>
<div style="left:221px;top:400px;width:3px;height:0.8px;background:#777;"></div>
<div class="t" style="left:193px;top:394.5px;width:40px;text-align:right;font-size:4.6px;color:#aaa">-10</div>
<div style="left:221px;top:430.7px;width:3px;height:0.8px;background:#777;"></div>
<div class="t" style="left:193px;top:425.2px;width:40px;text-align:right;font-size:4.6px;color:#aaa">-20</div>
<div style="left:450px;top:190.5px;width:45.3px;height:235.2px;background:#2a2a2a;box-shadow:0 0 0 1px #1e1e1e"></div>
<div style="left:450px;top:190.5px;width:45.3px;height:12.5px;background:#1462ac;"></div>
<div class="t" style="left:454.5px;top:190.8px;font-size:6.2px;color:#fff;font-weight:bold">Grou...</div>
<svg style="left:485px;top:193.0px" width="8" height="8" viewBox="0 0 8 8"><path d="M1 1 L7 7 M7 1 L1 7" stroke="#fff" stroke-width="1.3"/></svg>
<div style="left:450px;top:203.0px;width:45.3px;height:16.5px;background:#1e1e1e;"></div>
<div style="left:451px;top:203.0px;width:22px;height:2px;background:#2a8ee0;"></div>
<div class="t" style="left:454px;top:206.0px;font-size:6px;color:#fff;font-weight:bold">USR</div>
<div class="t" style="left:476px;top:206.0px;font-size:6px;color:#bbb;font-weight:bold">ARY</div>
<svg style="left:468px;top:227.5px" width="8" height="8" viewBox="0 0 8 8"><path d="M1 4 L4 1 L7 4 M1 7 L4 4 L7 7" fill="none" stroke="#eee" stroke-width="1.2"/></svg>
<svg style="left:468px;top:242.5px" width="8" height="5" viewBox="0 0 8 5"><path d="M1 4 L4 1 L7 4" fill="none" stroke="#eee" stroke-width="1.2"/></svg>
<svg style="left:468px;top:358.5px" width="8" height="5" viewBox="0 0 8 5"><path d="M1 1 L4 4 L7 1" fill="none" stroke="#eee" stroke-width="1.2"/></svg>
<svg style="left:468px;top:370.5px" width="8" height="8" viewBox="0 0 8 8"><path d="M1 1 L4 4 L7 1 M1 4 L4 7 L7 4" fill="none" stroke="#eee" stroke-width="1.2"/></svg>
<div style="left:462.5px;top:262.5px;width:0.8px;height:82px;background:#2e2e2e;"></div>
<div style="left:470.5px;top:262.5px;width:0.8px;height:82px;background:#2e2e2e;"></div>
<div style="left:461px;top:263.5px;width:5px;height:0.8px;background:#444;"></div>
<div style="left:468px;top:263.5px;width:5px;height:0.8px;background:#444;"></div>
<div style="left:461px;top:302.0px;width:5px;height:0.8px;background:#444;"></div>
<div style="left:468px;top:302.0px;width:5px;height:0.8px;background:#444;"></div>
<div style="left:461px;top:316.0px;width:5px;height:0.8px;background:#444;"></div>
<div style="left:468px;top:316.0px;width:5px;height:0.8px;background:#444;"></div>
<div style="left:461px;top:344.0px;width:5px;height:0.8px;background:#444;"></div>
<div style="left:468px;top:344.0px;width:5px;height:0.8px;background:#444;"></div>
<div class="t" style="left:450px;top:258.0px;width:41px;text-align:right;font-size:4.6px;color:#aaa">6</div>
<div class="t" style="left:450px;top:275.5px;width:41px;text-align:right;font-size:4.6px;color:#aaa">0</div>
<div class="t" style="left:450px;top:296.5px;width:41px;text-align:right;font-size:4.6px;color:#aaa">-10</div>
<div class="t" style="left:450px;top:310.5px;width:41px;text-align:right;font-size:4.6px;color:#aaa">-20</div>
<div class="t" style="left:450px;top:338.5px;width:41px;text-align:right;font-size:4.6px;color:#aaa">-40</div>
<div style="left:462px;top:269.8px;width:10.3px;height:23px;background:#f2f2f2;border-radius:1px"></div>
<div style="left:463.5px;top:281.0px;width:7px;height:1px;background:#333;"></div>
<div style="left:453.8px;top:381.0px;width:37px;height:14px;background:#3a3a3a;"></div>
<div class="t c" style="left:412.3px;top:383.5px;font-size:6.5px;color:#fff;font-weight:bold">0.0</div>
<div style="left:453.3px;top:396.0px;width:37.8px;height:4px;background:#f4f4f4;"></div>
<div style="left:453.8px;top:403.0px;width:37px;height:18.5px;background:#4a4a4a;"></div>
<div class="t c" style="left:412.3px;top:406.3px;font-size:6.5px;color:#eee;">M</div>
<div style="left:1005px;top:190.5px;width:45.3px;height:235.2px;background:#2a2a2a;box-shadow:0 0 0 1px #1e1e1e"></div>
<div style="left:1005px;top:190.5px;width:45.3px;height:12.5px;background:#1462ac;"></div>
<div class="t" style="left:1009.5px;top:190.8px;font-size:6.2px;color:#fff;font-weight:bold">Grou...</div>
<svg style="left:1040px;top:193.0px" width="8" height="8" viewBox="0 0 8 8"><path d="M1 1 L7 7 M7 1 L1 7" stroke="#fff" stroke-width="1.3"/></svg>
<div style="left:1005px;top:203.0px;width:45.3px;height:16.5px;background:#1e1e1e;"></div>
<div style="left:1006px;top:203.0px;width:22px;height:2px;background:#2a8ee0;"></div>
<div class="t" style="left:1009px;top:206.0px;font-size:6px;color:#fff;font-weight:bold">USR</div>
<div class="t" style="left:1031px;top:206.0px;font-size:6px;color:#bbb;font-weight:bold">ARY</div>
<svg style="left:1023px;top:227.5px" width="8" height="8" viewBox="0 0 8 8"><path d="M1 4 L4 1 L7 4 M1 7 L4 4 L7 7" fill="none" stroke="#eee" stroke-width="1.2"/></svg>
<svg style="left:1023px;top:242.5px" width="8" height="5" viewBox="0 0 8 5"><path d="M1 4 L4 1 L7 4" fill="none" stroke="#eee" stroke-width="1.2"/></svg>
<svg style="left:1023px;top:358.5px" width="8" height="5" viewBox="0 0 8 5"><path d="M1 1 L4 4 L7 1" fill="none" stroke="#eee" stroke-width="1.2"/></svg>
<svg style="left:1023px;top:370.5px" width="8" height="8" viewBox="0 0 8 8"><path d="M1 1 L4 4 L7 1 M1 4 L4 7 L7 4" fill="none" stroke="#eee" stroke-width="1.2"/></svg>
<div style="left:1017.5px;top:262.5px;width:0.8px;height:82px;background:#2e2e2e;"></div>
<div style="left:1025.5px;top:262.5px;width:0.8px;height:82px;background:#2e2e2e;"></div>
<div style="left:1016px;top:263.5px;width:5px;height:0.8px;background:#444;"></div>
<div style="left:1023px;top:263.5px;width:5px;height:0.8px;background:#444;"></div>
<div style="left:1016px;top:302.0px;width:5px;height:0.8px;background:#444;"></div>
<div style="left:1023px;top:302.0px;width:5px;height:0.8px;background:#444;"></div>
<div style="left:1016px;top:316.0px;width:5px;height:0.8px;background:#444;"></div>
<div style="left:1023px;top:316.0px;width:5px;height:0.8px;background:#444;"></div>
<div style="left:1016px;top:344.0px;width:5px;height:0.8px;background:#444;"></div>
<div style="left:1023px;top:344.0px;width:5px;height:0.8px;background:#444;"></div>
<div class="t" style="left:1005px;top:258.0px;width:41px;text-align:right;font-size:4.6px;color:#aaa">6</div>
<div class="t" style="left:1005px;top:275.5px;width:41px;text-align:right;font-size:4.6px;color:#aaa">0</div>
<div class="t" style="left:1005px;top:296.5px;width:41px;text-align:right;font-size:4.6px;color:#aaa">-10</div>
<div class="t" style="left:1005px;top:310.5px;width:41px;text-align:right;font-size:4.6px;color:#aaa">-20</div>
<div class="t" style="left:1005px;top:338.5px;width:41px;text-align:right;font-size:4.6px;color:#aaa">-40</div>
<div style="left:1017px;top:269.8px;width:10.3px;height:23px;background:#f2f2f2;border-radius:1px"></div>
<div style="left:1018.5px;top:281.0px;width:7px;height:1px;background:#333;"></div>
<div style="left:1008.8px;top:381.0px;width:37px;height:14px;background:#3a3a3a;"></div>
<div class="t c" style="left:967.3px;top:383.5px;font-size:6.5px;color:#fff;font-weight:bold">0.0</div>
<div style="left:1008.3px;top:396.0px;width:37.8px;height:4px;background:#f4f4f4;"></div>
<div style="left:1008.8px;top:403.0px;width:37px;height:18.5px;background:#4a4a4a;"></div>
<div class="t c" style="left:967.3px;top:406.3px;font-size:6.5px;color:#eee;">M</div>
<svg style="left:527px;top:84px" width="437" height="341" viewBox="0 0 437 341">
<defs><linearGradient id="bg1" x1="0" y1="0" x2="0" y2="1"><stop offset="0" stop-color="#1a8ee0"/><stop offset="1" stop-color="#0a3a66"/></linearGradient><linearGradient id="bg2" x1="0" y1="0" x2="0" y2="1"><stop offset="0" stop-color="#0a3a66"/><stop offset="1" stop-color="#1a8ee0"/></linearGradient></defs>
<rect x="0" y="0" width="437" height="341" fill="#262626"/>
<rect x="0.5" y="0.5" width="436" height="340" fill="none" stroke="#2f6fae" stroke-width="1"/>
<rect x="0" y="0" width="437" height="14" fill="#1462ac"/>
<text x="5" y="9.8" font-size="6.4" font-weight="bold" fill="#fff">Group - PEQ</text>
<path d="M427 4 L433 10 M433 4 L427 10" stroke="#fff" stroke-width="1.4"/>
<rect x="1" y="14" width="435" height="257" fill="#1c1c1c"/>
<rect x="1" y="14" width="29" height="17" fill="#272727"/>
<rect x="1" y="13" width="29" height="2" fill="#2a8ee0"/>
<text x="5" y="24.8" font-size="6.3" font-weight="bold" fill="#fff">USER</text>
<text x="34" y="24.5" font-size="6.5" fill="#999">ARRAY</text>
<path d="M429 20 L433 22.5 L429 25 Z" fill="#ccc"/>
<rect x="1" y="31" width="435" height="1" fill="#303030"/>
<rect x="39.82" y="32" width="1" height="229" fill="#333"/>
<rect x="57.19" y="32" width="1" height="229" fill="#333"/>
<rect x="70.66" y="32" width="1" height="229" fill="#333"/>
<rect x="81.66" y="32" width="1" height="229" fill="#333"/>
<rect x="90.97" y="32" width="1" height="229" fill="#333"/>
<rect x="99.03" y="32" width="1" height="229" fill="#333"/>
<rect x="106.14" y="32" width="1" height="229" fill="#333"/>
<rect x="112.50" y="32" width="1" height="229" fill="#333"/>
<rect x="154.34" y="32" width="1" height="229" fill="#333"/>
<rect x="178.82" y="32" width="1" height="229" fill="#333"/>
<rect x="196.19" y="32" width="1" height="229" fill="#333"/>
<rect x="209.66" y="32" width="1" height="229" fill="#333"/>
<rect x="220.66" y="32" width="1" height="229" fill="#333"/>
<rect x="229.97" y="32" width="1" height="229" fill="#333"/>
<rect x="238.03" y="32" width="1" height="229" fill="#333"/>
<rect x="245.14" y="32" width="1" height="229" fill="#333"/>
<rect x="251.50" y="32" width="1" height="229" fill="#333"/>
<rect x="293.34" y="32" width="1" height="229" fill="#333"/>
<rect x="317.82" y="32" width="1" height="229" fill="#333"/>
<rect x="335.19" y="32" width="1" height="229" fill="#333"/>
<rect x="348.66" y="32" width="1" height="229" fill="#333"/>
<rect x="359.66" y="32" width="1" height="229" fill="#333"/>
<rect x="368.97" y="32" width="1" height="229" fill="#333"/>
<rect x="377.03" y="32" width="1" height="229" fill="#333"/>
<rect x="384.14" y="32" width="1" height="229" fill="#333"/>
<rect x="390.50" y="32" width="1" height="229" fill="#333"/>
<rect x="9" y="92.10" width="424" height="1" fill="#363636"/>
<rect x="9" y="201.70" width="424" height="1" fill="#363636"/>
<text x="6" y="95" font-size="4.5" fill="#ccc">10</text>
<text x="7" y="150" font-size="4.5" fill="#ccc">0</text>
<text x="5" y="204.5" font-size="4.5" fill="#ccc">-10</text>
<text x="40.32" y="269" font-size="4.5" fill="#d0d0d0" text-anchor="middle">30</text>
<text x="57.69" y="269" font-size="4.5" fill="#d0d0d0" text-anchor="middle">40</text>
<text x="71.16" y="269" font-size="4.5" fill="#d0d0d0" text-anchor="middle">50</text>
<text x="82.16" y="269" font-size="4.5" fill="#d0d0d0" text-anchor="middle">60</text>
<text x="91.47" y="269" font-size="4.5" fill="#d0d0d0" text-anchor="middle">70</text>
<text x="99.53" y="269" font-size="4.5" fill="#d0d0d0" text-anchor="middle">80</text>
<text x="106.64" y="269" font-size="4.5" fill="#d0d0d0" text-anchor="middle">90</text>
<text x="113.00" y="269" font-size="4.5" fill="#d0d0d0" text-anchor="middle">100</text>
<text x="154.84" y="269" font-size="4.5" fill="#d0d0d0" text-anchor="middle">200</text>
<text x="179.32" y="269" font-size="4.5" fill="#d0d0d0" text-anchor="middle">300</text>
<text x="196.69" y="269" font-size="4.5" fill="#d0d0d0" text-anchor="middle">400</text>
<text x="210.16" y="269" font-size="4.5" fill="#d0d0d0" text-anchor="middle">500</text>
<text x="221.16" y="269" font-size="4.5" fill="#d0d0d0" text-anchor="middle">600</text>
<text x="230.47" y="269" font-size="4.5" fill="#d0d0d0" text-anchor="middle">700</text>
<text x="238.53" y="269" font-size="4.5" fill="#d0d0d0" text-anchor="middle">800</text>
<text x="252.00" y="269" font-size="4.5" fill="#d0d0d0" text-anchor="middle">1k</text>
<text x="293.84" y="269" font-size="4.5" fill="#d0d0d0" text-anchor="middle">2k</text>
<text x="318.32" y="269" font-size="4.5" fill="#d0d0d0" text-anchor="middle">3k</text>
<text x="335.69" y="269" font-size="4.5" fill="#d0d0d0" text-anchor="middle">4k</text>
<text x="349.16" y="269" font-size="4.5" fill="#d0d0d0" text-anchor="middle">5k</text>
<text x="360.16" y="269" font-size="4.5" fill="#d0d0d0" text-anchor="middle">6k</text>
<text x="377.53" y="269" font-size="4.5" fill="#d0d0d0" text-anchor="middle">8k</text>
<text x="391.00" y="269" font-size="4.5" fill="#d0d0d0" text-anchor="middle">10k</text>
<defs><linearGradient id="gp" gradientUnits="userSpaceOnUse" x1="0" y1="116" x2="0" y2="172"><stop offset="0" stop-color="#1c8ad0"/><stop offset="0.5" stop-color="#0c4a78"/><stop offset="1" stop-color="#1c8ad0"/></linearGradient></defs>
<path d="M15.80,147.50 L15.80,131.68 16.60,131.45 17.40,131.23 18.20,131.01 19.00,130.80 19.80,130.59 20.60,130.38 21.40,130.17 22.20,129.97 23.00,129.77 23.80,129.58 24.60,129.40 25.40,129.22 26.20,129.04 27.00,128.87 27.80,128.71 28.60,128.56 29.40,128.41 30.20,128.27 31.00,128.14 31.80,128.02 32.60,127.90 33.40,127.80 34.20,127.70 35.00,127.61 35.80,127.53 36.60,127.46 37.40,127.40 38.20,127.35 39.00,127.31 39.80,127.28 40.60,127.25 41.40,127.24 42.20,127.24 43.00,127.25 43.80,127.27 44.60,127.29 45.40,127.33 46.20,127.37 47.00,127.43 47.80,127.49 48.60,127.56 49.40,127.64 50.20,127.73 51.00,127.83 51.80,127.93 52.60,128.04 53.40,128.16 54.20,128.28 55.00,128.41 55.80,128.55 56.60,128.69 57.40,128.83 58.20,128.98 59.00,129.14 59.80,129.30 60.60,129.46 61.40,129.62 62.20,129.79 63.00,129.96 63.80,130.13 64.60,130.30 65.40,130.47 66.20,130.65 67.00,130.82 67.80,131.00 68.60,131.17 69.40,131.34 70.20,131.51 71.00,131.68 71.80,131.85 72.60,132.01 73.40,132.17 74.20,132.33 75.00,132.48 75.80,132.64 76.60,132.78 77.40,132.92 78.20,133.06 79.00,133.19 79.80,133.32 80.60,133.44 81.40,133.55 82.20,133.66 83.00,133.76 83.80,133.85 84.60,133.93 85.40,134.00 86.20,134.07 87.00,134.13 87.80,134.17 88.60,134.21 89.40,134.23 90.20,134.24 91.00,134.24 91.80,134.23 92.60,134.20 93.40,134.16 94.20,134.10 95.00,134.03 95.80,133.93 96.60,133.82 97.40,133.69 98.20,133.54 99.00,133.37 99.80,133.18 100.60,132.96 101.40,132.71 102.20,132.44 103.00,132.14 103.80,131.81 104.60,131.45 105.40,131.05 106.20,130.62 107.00,130.15 107.80,129.64 108.60,129.10 109.40,128.52 110.20,127.89 111.00,127.23 111.80,126.52 112.60,125.78 113.40,125.00 114.20,124.20 115.00,123.37 115.80,122.52 116.60,121.66 117.40,120.82 118.20,119.99 119.00,119.20 119.80,118.47 120.60,117.81 121.40,117.26 122.20,116.82 123.00,116.52 123.80,116.36 124.60,116.37 125.40,116.53 126.20,116.84 127.00,117.31 127.80,117.90 128.60,118.61 129.40,119.41 130.20,120.28 131.00,121.21 131.80,122.17 132.60,123.14 133.40,124.12 134.20,125.09 135.00,126.03 135.80,126.96 136.60,127.84 137.40,128.70 138.20,129.51 139.00,130.28 139.80,131.01 140.60,131.69 141.40,132.34 142.20,132.94 143.00,133.50 143.80,134.02 144.60,134.51 145.40,134.95 146.20,135.36 147.00,135.73 147.80,136.06 148.60,136.37 149.40,136.63 150.20,136.86 151.00,137.06 151.80,137.22 152.60,137.35 153.40,137.45 154.20,137.50 155.00,137.52 155.80,137.50 156.60,137.44 157.40,137.34 158.20,137.19 159.00,137.00 159.80,136.76 160.60,136.47 161.40,136.13 162.20,135.75 163.00,135.33 163.80,134.87 164.60,134.39 165.40,133.90 166.20,133.42 167.00,132.98 167.80,132.61 168.60,132.34 169.40,132.18 170.20,132.17 171.00,132.31 171.80,132.60 172.60,133.03 173.40,133.57 174.20,134.19 175.00,134.88 175.80,135.59 176.60,136.31 177.40,137.02 178.20,137.71 179.00,138.37 179.80,138.99 180.60,139.56 181.40,140.10 182.20,140.60 183.00,141.06 183.80,141.48 184.60,141.87 185.40,142.23 186.20,142.56 187.00,142.86 187.80,143.14 188.60,143.40 189.40,143.64 190.20,143.86 191.00,144.07 191.80,144.26 192.60,144.44 193.40,144.61 194.20,144.77 195.00,144.91 195.80,145.05 196.60,145.18 197.40,145.31 198.20,145.42 199.00,145.53 199.80,145.64 200.60,145.74 201.40,145.83 202.20,145.92 203.00,146.01 203.80,146.09 204.60,146.17 205.40,146.24 206.20,146.31 207.00,146.38 207.80,146.45 208.60,146.52 209.40,146.58 210.20,146.64 211.00,146.70 211.80,146.76 212.60,146.81 213.40,146.87 214.20,146.92 215.00,146.97 215.80,147.02 216.60,147.07 217.40,147.12 218.20,147.16 219.00,147.21 219.80,147.26 220.60,147.30 221.40,147.35 222.20,147.39 223.00,147.43 223.80,147.48 224.60,147.52 225.40,147.56 226.20,147.60 227.00,147.64 227.80,147.69 228.60,147.73 229.40,147.77 230.20,147.81 231.00,147.85 231.80,147.89 232.60,147.93 233.40,147.97 234.20,148.01 235.00,148.06 235.80,148.10 236.60,148.14 237.40,148.18 238.20,148.22 239.00,148.27 239.80,148.31 240.60,148.35 241.40,148.40 242.20,148.44 243.00,148.49 243.80,148.53 244.60,148.58 245.40,148.62 246.20,148.67 247.00,148.72 247.80,148.77 248.60,148.82 249.40,148.86 250.20,148.92 251.00,148.97 251.80,149.02 252.60,149.07 253.40,149.13 254.20,149.18 255.00,149.24 255.80,149.29 256.60,149.35 257.40,149.41 258.20,149.47 259.00,149.53 259.80,149.59 260.60,149.66 261.40,149.72 262.20,149.79 263.00,149.85 263.80,149.92 264.60,149.99 265.40,150.06 266.20,150.13 267.00,150.21 267.80,150.28 268.60,150.36 269.40,150.44 270.20,150.51 271.00,150.60 271.80,150.68 272.60,150.76 273.40,150.85 274.20,150.94 275.00,151.03 275.80,151.12 276.60,151.21 277.40,151.30 278.20,151.40 279.00,151.50 279.80,151.60 280.60,151.70 281.40,151.81 282.20,151.91 283.00,152.02 283.80,152.13 284.60,152.24 285.40,152.36 286.20,152.48 287.00,152.59 287.80,152.72 288.60,152.84 289.40,152.96 290.20,153.09 291.00,153.22 291.80,153.35 292.60,153.49 293.40,153.63 294.20,153.77 295.00,153.91 295.80,154.05 296.60,154.20 297.40,154.35 298.20,154.50 299.00,154.65 299.80,154.81 300.60,154.97 301.40,155.13 302.20,155.29 303.00,155.46 303.80,155.63 304.60,155.80 305.40,155.97 306.20,156.15 307.00,156.33 307.80,156.51 308.60,156.69 309.40,156.88 310.20,157.06 311.00,157.25 311.80,157.45 312.60,157.64 313.40,157.84 314.20,158.04 315.00,158.24 315.80,158.45 316.60,158.65 317.40,158.86 318.20,159.07 319.00,159.28 319.80,159.50 320.60,159.71 321.40,159.93 322.20,160.15 323.00,160.37 323.80,160.60 324.60,160.82 325.40,161.05 326.20,161.28 327.00,161.51 327.80,161.74 328.60,161.97 329.40,162.20 330.20,162.43 331.00,162.67 331.80,162.90 332.60,163.14 333.40,163.38 334.20,163.61 335.00,163.85 335.80,164.09 336.60,164.32 337.40,164.56 338.20,164.80 339.00,165.03 339.80,165.27 340.60,165.50 341.40,165.74 342.20,165.97 343.00,166.20 343.80,166.43 344.60,166.66 345.40,166.89 346.20,167.12 347.00,167.34 347.80,167.56 348.60,167.78 349.40,168.00 350.20,168.21 351.00,168.42 351.80,168.63 352.60,168.84 353.40,169.04 354.20,169.24 355.00,169.43 355.80,169.62 356.60,169.81 357.40,169.99 358.20,170.17 359.00,170.34 359.80,170.51 360.60,170.67 361.40,170.83 362.20,170.98 363.00,171.13 363.80,171.27 364.60,171.40 365.40,171.53 366.20,171.66 367.00,171.77 367.80,171.88 368.60,171.99 369.40,172.08 370.20,172.18 371.00,172.26 371.80,172.34 372.60,172.41 373.40,172.47 374.20,172.51 375.00,172.55 375.80,172.56 376.60,172.56 377.40,172.55 378.20,172.52 379.00,172.47 379.80,172.41 380.60,172.34 381.40,172.24 382.20,172.14 383.00,172.01 383.80,171.88 384.60,171.72 385.40,171.56 386.20,171.38 387.00,171.18 387.80,170.97 388.60,170.75 389.40,170.51 390.20,170.26 391.00,170.00 391.80,169.72 392.60,169.43 393.40,169.13 394.20,168.82 395.00,168.50 395.80,168.17 396.60,167.83 397.40,167.47 398.20,167.11 399.00,166.74 399.80,166.36 400.60,165.98 401.40,165.58 402.20,165.18 403.00,164.78 403.80,164.36 404.60,163.94 405.40,163.52 406.20,163.09 407.00,162.66 407.80,162.22 408.60,161.78 409.40,161.34 410.20,160.89 411.00,160.45 411.80,160.00 412.60,159.55 413.40,159.10 414.20,158.65 415.00,158.20 415.80,157.75 416.60,157.31 417.40,156.86 418.20,156.41 419.00,155.97 419.80,155.53 420.60,155.09 421.40,154.66 422.20,154.23 423.00,153.80 423.80,153.38 424.60,152.96 425.40,152.55 426.20,152.14 427.00,151.73 427.80,151.34 428.60,150.94 429.40,150.56 430.20,150.17 431.00,149.80 431.80,149.43 L431.80,147.50 Z" fill="url(#gp)"/>
<polyline points="15.80,131.89 16.60,131.67 17.40,131.46 18.20,131.25 19.00,131.04 19.80,130.83 20.60,130.63 21.40,130.43 22.20,130.24 23.00,130.05 23.80,129.87 24.60,129.69 25.40,129.52 26.20,129.35 27.00,129.19 27.80,129.04 28.60,128.89 29.40,128.76 30.20,128.63 31.00,128.51 31.80,128.39 32.60,128.29 33.40,128.19 34.20,128.11 35.00,128.03 35.80,127.96 36.60,127.91 37.40,127.86 38.20,127.82 39.00,127.80 39.80,127.78 40.60,127.77 41.40,127.78 42.20,127.79 43.00,127.81 43.80,127.85 44.60,127.89 45.40,127.95 46.20,128.01 47.00,128.08 47.80,128.17 48.60,128.26 49.40,128.36 50.20,128.47 51.00,128.59 51.80,128.72 52.60,128.85 53.40,129.00 54.20,129.15 55.00,129.30 55.80,129.47 56.60,129.64 57.40,129.81 58.20,129.99 59.00,130.18 59.80,130.37 60.60,130.57 61.40,130.77 62.20,130.97 63.00,131.18 63.80,131.39 64.60,131.61 65.40,131.83 66.20,132.05 67.00,132.27 67.80,132.49 68.60,132.71 69.40,132.94 70.20,133.17 71.00,133.39 71.80,133.62 72.60,133.85 73.40,134.08 74.20,134.30 75.00,134.53 75.80,134.76 76.60,134.98 77.40,135.21 78.20,135.43 79.00,135.65 79.80,135.87 80.60,136.09 81.40,136.30 82.20,136.52 83.00,136.73 83.80,136.94 84.60,137.15 85.40,137.35 86.20,137.56 87.00,137.76 87.80,137.96 88.60,138.15 89.40,138.35 90.20,138.54 91.00,138.73 91.80,138.91 92.60,139.09 93.40,139.27 94.20,139.45 95.00,139.62 95.80,139.80 96.60,139.96 97.40,140.13 98.20,140.29 99.00,140.45 99.80,140.61 100.60,140.77 101.40,140.92 102.20,141.07 103.00,141.21 103.80,141.36 104.60,141.50 105.40,141.63 106.20,141.77 107.00,141.90 107.80,142.03 108.60,142.16 109.40,142.28 110.20,142.41 111.00,142.53 111.80,142.64 112.60,142.76 113.40,142.87 114.20,142.98 115.00,143.09 115.80,143.20 116.60,143.30 117.40,143.40 118.20,143.50 119.00,143.59 119.80,143.69 120.60,143.78 121.40,143.87 122.20,143.96 123.00,144.05 123.80,144.13 124.60,144.21 125.40,144.29 126.20,144.37 127.00,144.45 127.80,144.53 128.60,144.60 129.40,144.67 130.20,144.74 131.00,144.81 131.80,144.88 132.60,144.94 133.40,145.01 134.20,145.07 135.00,145.13 135.80,145.19 136.60,145.25 137.40,145.30 138.20,145.36 139.00,145.41 139.80,145.46 140.60,145.51 141.40,145.56 142.20,145.61 143.00,145.66 143.80,145.71 144.60,145.75 145.40,145.80 146.20,145.84 147.00,145.88 147.80,145.92 148.60,145.96 149.40,146.00 150.20,146.04 151.00,146.08 151.80,146.11 152.60,146.15 153.40,146.18 154.20,146.22 155.00,146.25 155.80,146.28 156.60,146.31 157.40,146.34 158.20,146.37 159.00,146.40 159.80,146.43 160.60,146.46 161.40,146.48 162.20,146.51 163.00,146.54 163.80,146.56 164.60,146.59 165.40,146.61 166.20,146.63 167.00,146.65 167.80,146.68 168.60,146.70 169.40,146.72 170.20,146.74 171.00,146.76 171.80,146.78 172.60,146.80 173.40,146.81 174.20,146.83 175.00,146.85 175.80,146.87 176.60,146.88 177.40,146.90 178.20,146.91 179.00,146.93 179.80,146.94 180.60,146.96 181.40,146.97 182.20,146.99 183.00,147.00 183.80,147.01 184.60,147.02 185.40,147.04 186.20,147.05 187.00,147.06 187.80,147.07 188.60,147.08 189.40,147.09 190.20,147.10 191.00,147.11 191.80,147.12 192.60,147.13 193.40,147.14 194.20,147.15 195.00,147.16 195.80,147.17 196.60,147.18 197.40,147.19 198.20,147.20 199.00,147.20 199.80,147.21 200.60,147.22 201.40,147.23 202.20,147.23 203.00,147.24 203.80,147.25 204.60,147.25 205.40,147.26 206.20,147.27 207.00,147.27 207.80,147.28 208.60,147.28 209.40,147.29 210.20,147.30 211.00,147.30 211.80,147.31 212.60,147.31 213.40,147.32 214.20,147.32 215.00,147.33 215.80,147.33 216.60,147.33 217.40,147.34 218.20,147.34 219.00,147.35 219.80,147.35 220.60,147.35 221.40,147.36 222.20,147.36 223.00,147.37 223.80,147.37 224.60,147.37 225.40,147.38 226.20,147.38 227.00,147.38 227.80,147.39 228.60,147.39 229.40,147.39 230.20,147.39 231.00,147.40 231.80,147.40 232.60,147.40 233.40,147.40 234.20,147.41 235.00,147.41 235.80,147.41 236.60,147.41 237.40,147.42 238.20,147.42 239.00,147.42 239.80,147.42 240.60,147.43 241.40,147.43 242.20,147.43 243.00,147.43 243.80,147.43 244.60,147.43 245.40,147.44 246.20,147.44 247.00,147.44 247.80,147.44 248.60,147.44 249.40,147.44 250.20,147.45 251.00,147.45 251.80,147.45 252.60,147.45 253.40,147.45 254.20,147.45 255.00,147.45 255.80,147.45 256.60,147.46 257.40,147.46 258.20,147.46 259.00,147.46 259.80,147.46 260.60,147.46 261.40,147.46 262.20,147.46 263.00,147.46 263.80,147.47 264.60,147.47 265.40,147.47 266.20,147.47 267.00,147.47 267.80,147.47 268.60,147.47 269.40,147.47 270.20,147.47 271.00,147.47 271.80,147.47 272.60,147.47 273.40,147.47 274.20,147.48 275.00,147.48 275.80,147.48 276.60,147.48 277.40,147.48 278.20,147.48 279.00,147.48 279.80,147.48 280.60,147.48 281.40,147.48 282.20,147.48 283.00,147.48 283.80,147.48 284.60,147.48 285.40,147.48 286.20,147.48 287.00,147.48 287.80,147.48 288.60,147.48 289.40,147.49 290.20,147.49 291.00,147.49 291.80,147.49 292.60,147.49 293.40,147.49 294.20,147.49 295.00,147.49 295.80,147.49 296.60,147.49 297.40,147.49 298.20,147.49 299.00,147.49 299.80,147.49 300.60,147.49 301.40,147.49 302.20,147.49 303.00,147.49 303.80,147.49 304.60,147.49 305.40,147.49 306.20,147.49 307.00,147.49 307.80,147.49 308.60,147.49 309.40,147.49 310.20,147.49 311.00,147.49 311.80,147.49 312.60,147.49 313.40,147.49 314.20,147.49 315.00,147.49 315.80,147.49 316.60,147.49 317.40,147.49 318.20,147.49 319.00,147.49 319.80,147.49 320.60,147.49 321.40,147.49 322.20,147.49 323.00,147.50 323.80,147.50 324.60,147.50 325.40,147.50 326.20,147.50 327.00,147.50 327.80,147.50 328.60,147.50 329.40,147.50 330.20,147.50 331.00,147.50 331.80,147.50 332.60,147.50 333.40,147.50 334.20,147.50 335.00,147.50 335.80,147.50 336.60,147.50 337.40,147.50 338.20,147.50 339.00,147.50 339.80,147.50 340.60,147.50 341.40,147.50 342.20,147.50 343.00,147.50 343.80,147.50 344.60,147.50 345.40,147.50 346.20,147.50 347.00,147.50 347.80,147.50 348.60,147.50 349.40,147.50 350.20,147.50 351.00,147.50 351.80,147.50 352.60,147.50 353.40,147.50 354.20,147.50 355.00,147.50 355.80,147.50 356.60,147.50 357.40,147.50 358.20,147.50 359.00,147.50 359.80,147.50 360.60,147.50 361.40,147.50 362.20,147.50 363.00,147.50 363.80,147.50 364.60,147.50 365.40,147.50 366.20,147.50 367.00,147.50 367.80,147.50 368.60,147.50 369.40,147.50 370.20,147.50 371.00,147.50 371.80,147.50 372.60,147.50 373.40,147.50 374.20,147.50 375.00,147.50 375.80,147.50 376.60,147.50 377.40,147.50 378.20,147.50 379.00,147.50 379.80,147.50 380.60,147.50 381.40,147.50 382.20,147.50 383.00,147.50 383.80,147.50 384.60,147.50 385.40,147.50 386.20,147.50 387.00,147.50 387.80,147.50 388.60,147.50 389.40,147.50 390.20,147.50 391.00,147.50 391.80,147.50 392.60,147.50 393.40,147.50 394.20,147.50 395.00,147.50 395.80,147.50 396.60,147.50 397.40,147.50 398.20,147.50 399.00,147.50 399.80,147.50 400.60,147.50 401.40,147.50 402.20,147.50 403.00,147.50 403.80,147.50 404.60,147.50 405.40,147.50 406.20,147.50 407.00,147.50 407.80,147.50 408.60,147.50 409.40,147.50 410.20,147.50 411.00,147.50 411.80,147.50 412.60,147.50 413.40,147.50 414.20,147.50 415.00,147.50 415.80,147.50 416.60,147.50 417.40,147.50 418.20,147.50 419.00,147.50 419.80,147.50 420.60,147.50 421.40,147.50 422.20,147.50 423.00,147.50 423.80,147.50 424.60,147.50 425.40,147.50 426.20,147.50 427.00,147.50 427.80,147.50 428.60,147.50 429.40,147.50 430.20,147.50 431.00,147.50 431.80,147.50" fill="none" stroke="#a8c8d8" stroke-width="0.7" opacity="0.55"/>
<polyline points="15.80,147.29 16.60,147.29 17.40,147.28 18.20,147.28 19.00,147.27 19.80,147.26 20.60,147.26 21.40,147.25 22.20,147.24 23.00,147.23 23.80,147.23 24.60,147.22 25.40,147.21 26.20,147.20 27.00,147.19 27.80,147.18 28.60,147.18 29.40,147.17 30.20,147.16 31.00,147.15 31.80,147.14 32.60,147.13 33.40,147.12 34.20,147.10 35.00,147.09 35.80,147.08 36.60,147.07 37.40,147.06 38.20,147.04 39.00,147.03 39.80,147.01 40.60,147.00 41.40,146.99 42.20,146.97 43.00,146.95 43.80,146.94 44.60,146.92 45.40,146.90 46.20,146.88 47.00,146.87 47.80,146.85 48.60,146.83 49.40,146.81 50.20,146.78 51.00,146.76 51.80,146.74 52.60,146.71 53.40,146.69 54.20,146.66 55.00,146.64 55.80,146.61 56.60,146.58 57.40,146.55 58.20,146.52 59.00,146.49 59.80,146.46 60.60,146.42 61.40,146.39 62.20,146.35 63.00,146.31 63.80,146.27 64.60,146.23 65.40,146.19 66.20,146.14 67.00,146.10 67.80,146.05 68.60,146.00 69.40,145.95 70.20,145.89 71.00,145.84 71.80,145.78 72.60,145.71 73.40,145.65 74.20,145.58 75.00,145.51 75.80,145.44 76.60,145.36 77.40,145.28 78.20,145.20 79.00,145.11 79.80,145.02 80.60,144.92 81.40,144.82 82.20,144.72 83.00,144.60 83.80,144.49 84.60,144.36 85.40,144.24 86.20,144.10 87.00,143.96 87.80,143.81 88.60,143.65 89.40,143.48 90.20,143.31 91.00,143.12 91.80,142.93 92.60,142.72 93.40,142.50 94.20,142.27 95.00,142.02 95.80,141.76 96.60,141.49 97.40,141.20 98.20,140.89 99.00,140.56 99.80,140.22 100.60,139.85 101.40,139.46 102.20,139.04 103.00,138.60 103.80,138.13 104.60,137.63 105.40,137.10 106.20,136.54 107.00,135.95 107.80,135.32 108.60,134.65 109.40,133.95 110.20,133.21 111.00,132.44 111.80,131.62 112.60,130.78 113.40,129.90 114.20,128.99 115.00,128.06 115.80,127.12 116.60,126.17 117.40,125.23 118.20,124.32 119.00,123.45 119.80,122.63 120.60,121.90 121.40,121.27 122.20,120.76 123.00,120.39 123.80,120.16 124.60,120.10 125.40,120.20 126.20,120.46 127.00,120.87 127.80,121.41 128.60,122.06 129.40,122.82 130.20,123.65 131.00,124.53 131.80,125.45 132.60,126.39 133.40,127.34 134.20,128.28 135.00,129.20 135.80,130.10 136.60,130.98 137.40,131.82 138.20,132.62 139.00,133.39 139.80,134.12 140.60,134.81 141.40,135.47 142.20,136.09 143.00,136.68 143.80,137.23 144.60,137.75 145.40,138.24 146.20,138.70 147.00,139.14 147.80,139.55 148.60,139.93 149.40,140.30 150.20,140.64 151.00,140.96 151.80,141.27 152.60,141.55 153.40,141.83 154.20,142.08 155.00,142.32 155.80,142.55 156.60,142.77 157.40,142.97 158.20,143.17 159.00,143.35 159.80,143.52 160.60,143.69 161.40,143.84 162.20,143.99 163.00,144.13 163.80,144.27 164.60,144.39 165.40,144.51 166.20,144.63 167.00,144.74 167.80,144.84 168.60,144.94 169.40,145.04 170.20,145.13 171.00,145.22 171.80,145.30 172.60,145.38 173.40,145.46 174.20,145.53 175.00,145.60 175.80,145.67 176.60,145.73 177.40,145.79 178.20,145.85 179.00,145.91 179.80,145.96 180.60,146.01 181.40,146.06 182.20,146.11 183.00,146.16 183.80,146.20 184.60,146.24 185.40,146.28 186.20,146.32 187.00,146.36 187.80,146.40 188.60,146.43 189.40,146.47 190.20,146.50 191.00,146.53 191.80,146.56 192.60,146.59 193.40,146.62 194.20,146.64 195.00,146.67 195.80,146.70 196.60,146.72 197.40,146.74 198.20,146.77 199.00,146.79 199.80,146.81 200.60,146.83 201.40,146.85 202.20,146.87 203.00,146.89 203.80,146.91 204.60,146.92 205.40,146.94 206.20,146.96 207.00,146.97 207.80,146.99 208.60,147.00 209.40,147.02 210.20,147.03 211.00,147.05 211.80,147.06 212.60,147.07 213.40,147.08 214.20,147.10 215.00,147.11 215.80,147.12 216.60,147.13 217.40,147.14 218.20,147.15 219.00,147.16 219.80,147.17 220.60,147.18 221.40,147.19 222.20,147.20 223.00,147.20 223.80,147.21 224.60,147.22 225.40,147.23 226.20,147.24 227.00,147.24 227.80,147.25 228.60,147.26 229.40,147.26 230.20,147.27 231.00,147.28 231.80,147.28 232.60,147.29 233.40,147.29 234.20,147.30 235.00,147.31 235.80,147.31 236.60,147.32 237.40,147.32 238.20,147.33 239.00,147.33 239.80,147.34 240.60,147.34 241.40,147.34 242.20,147.35 243.00,147.35 243.80,147.36 244.60,147.36 245.40,147.36 246.20,147.37 247.00,147.37 247.80,147.37 248.60,147.38 249.40,147.38 250.20,147.38 251.00,147.39 251.80,147.39 252.60,147.39 253.40,147.40 254.20,147.40 255.00,147.40 255.80,147.40 256.60,147.41 257.40,147.41 258.20,147.41 259.00,147.41 259.80,147.42 260.60,147.42 261.40,147.42 262.20,147.42 263.00,147.43 263.80,147.43 264.60,147.43 265.40,147.43 266.20,147.43 267.00,147.43 267.80,147.44 268.60,147.44 269.40,147.44 270.20,147.44 271.00,147.44 271.80,147.44 272.60,147.45 273.40,147.45 274.20,147.45 275.00,147.45 275.80,147.45 276.60,147.45 277.40,147.45 278.20,147.46 279.00,147.46 279.80,147.46 280.60,147.46 281.40,147.46 282.20,147.46 283.00,147.46 283.80,147.46 284.60,147.46 285.40,147.46 286.20,147.47 287.00,147.47 287.80,147.47 288.60,147.47 289.40,147.47 290.20,147.47 291.00,147.47 291.80,147.47 292.60,147.47 293.40,147.47 294.20,147.47 295.00,147.47 295.80,147.48 296.60,147.48 297.40,147.48 298.20,147.48 299.00,147.48 299.80,147.48 300.60,147.48 301.40,147.48 302.20,147.48 303.00,147.48 303.80,147.48 304.60,147.48 305.40,147.48 306.20,147.48 307.00,147.48 307.80,147.48 308.60,147.48 309.40,147.48 310.20,147.48 311.00,147.48 311.80,147.49 312.60,147.49 313.40,147.49 314.20,147.49 315.00,147.49 315.80,147.49 316.60,147.49 317.40,147.49 318.20,147.49 319.00,147.49 319.80,147.49 320.60,147.49 321.40,147.49 322.20,147.49 323.00,147.49 323.80,147.49 324.60,147.49 325.40,147.49 326.20,147.49 327.00,147.49 327.80,147.49 328.60,147.49 329.40,147.49 330.20,147.49 331.00,147.49 331.80,147.49 332.60,147.49 333.40,147.49 334.20,147.49 335.00,147.49 335.80,147.49 336.60,147.49 337.40,147.49 338.20,147.49 339.00,147.49 339.80,147.49 340.60,147.49 341.40,147.49 342.20,147.49 343.00,147.49 343.80,147.49 344.60,147.50 345.40,147.50 346.20,147.50 347.00,147.50 347.80,147.50 348.60,147.50 349.40,147.50 350.20,147.50 351.00,147.50 351.80,147.50 352.60,147.50 353.40,147.50 354.20,147.50 355.00,147.50 355.80,147.50 356.60,147.50 357.40,147.50 358.20,147.50 359.00,147.50 359.80,147.50 360.60,147.50 361.40,147.50 362.20,147.50 363.00,147.50 363.80,147.50 364.60,147.50 365.40,147.50 366.20,147.50 367.00,147.50 367.80,147.50 368.60,147.50 369.40,147.50 370.20,147.50 371.00,147.50 371.80,147.50 372.60,147.50 373.40,147.50 374.20,147.50 375.00,147.50 375.80,147.50 376.60,147.50 377.40,147.50 378.20,147.50 379.00,147.50 379.80,147.50 380.60,147.50 381.40,147.50 382.20,147.50 383.00,147.50 383.80,147.50 384.60,147.50 385.40,147.50 386.20,147.50 387.00,147.50 387.80,147.50 388.60,147.50 389.40,147.50 390.20,147.50 391.00,147.50 391.80,147.50 392.60,147.50 393.40,147.50 394.20,147.50 395.00,147.50 395.80,147.50 396.60,147.50 397.40,147.50 398.20,147.50 399.00,147.50 399.80,147.50 400.60,147.50 401.40,147.50 402.20,147.50 403.00,147.50 403.80,147.50 404.60,147.50 405.40,147.50 406.20,147.50 407.00,147.50 407.80,147.50 408.60,147.50 409.40,147.50 410.20,147.50 411.00,147.50 411.80,147.50 412.60,147.50 413.40,147.50 414.20,147.50 415.00,147.50 415.80,147.50 416.60,147.50 417.40,147.50 418.20,147.50 419.00,147.50 419.80,147.50 420.60,147.50 421.40,147.50 422.20,147.50 423.00,147.50 423.80,147.50 424.60,147.50 425.40,147.50 426.20,147.50 427.00,147.50 427.80,147.50 428.60,147.50 429.40,147.50 430.20,147.50 431.00,147.50 431.80,147.50" fill="none" stroke="#a8c8d8" stroke-width="0.7" opacity="0.55"/>
<polyline points="15.80,147.49 16.60,147.49 17.40,147.49 18.20,147.49 19.00,147.49 19.80,147.49 20.60,147.49 21.40,147.49 22.20,147.49 23.00,147.49 23.80,147.49 24.60,147.49 25.40,147.49 26.20,147.49 27.00,147.49 27.80,147.49 28.60,147.49 29.40,147.49 30.20,147.49 31.00,147.49 31.80,147.49 32.60,147.49 33.40,147.48 34.20,147.48 35.00,147.48 35.80,147.48 36.60,147.48 37.40,147.48 38.20,147.48 39.00,147.48 39.80,147.48 40.60,147.48 41.40,147.48 42.20,147.48 43.00,147.48 43.80,147.48 44.60,147.48 45.40,147.48 46.20,147.48 47.00,147.48 47.80,147.48 48.60,147.47 49.40,147.47 50.20,147.47 51.00,147.47 51.80,147.47 52.60,147.47 53.40,147.47 54.20,147.47 55.00,147.47 55.80,147.47 56.60,147.47 57.40,147.47 58.20,147.46 59.00,147.46 59.80,147.46 60.60,147.46 61.40,147.46 62.20,147.46 63.00,147.46 63.80,147.46 64.60,147.46 65.40,147.45 66.20,147.45 67.00,147.45 67.80,147.45 68.60,147.45 69.40,147.45 70.20,147.45 71.00,147.44 71.80,147.44 72.60,147.44 73.40,147.44 74.20,147.44 75.00,147.44 75.80,147.43 76.60,147.43 77.40,147.43 78.20,147.43 79.00,147.43 79.80,147.42 80.60,147.42 81.40,147.42 82.20,147.42 83.00,147.41 83.80,147.41 84.60,147.41 85.40,147.41 86.20,147.40 87.00,147.40 87.80,147.40 88.60,147.40 89.40,147.39 90.20,147.39 91.00,147.39 91.80,147.38 92.60,147.38 93.40,147.37 94.20,147.37 95.00,147.37 95.80,147.36 96.60,147.36 97.40,147.35 98.20,147.35 99.00,147.34 99.80,147.34 100.60,147.33 101.40,147.33 102.20,147.32 103.00,147.32 103.80,147.31 104.60,147.30 105.40,147.30 106.20,147.29 107.00,147.28 107.80,147.28 108.60,147.27 109.40,147.26 110.20,147.25 111.00,147.24 111.80,147.24 112.60,147.23 113.40,147.22 114.20,147.21 115.00,147.20 115.80,147.18 116.60,147.17 117.40,147.16 118.20,147.15 119.00,147.13 119.80,147.12 120.60,147.11 121.40,147.09 122.20,147.08 123.00,147.06 123.80,147.04 124.60,147.02 125.40,147.00 126.20,146.98 127.00,146.96 127.80,146.94 128.60,146.91 129.40,146.89 130.20,146.86 131.00,146.83 131.80,146.80 132.60,146.77 133.40,146.74 134.20,146.70 135.00,146.67 135.80,146.63 136.60,146.58 137.40,146.54 138.20,146.49 139.00,146.44 139.80,146.38 140.60,146.32 141.40,146.26 142.20,146.19 143.00,146.11 143.80,146.04 144.60,145.95 145.40,145.86 146.20,145.76 147.00,145.65 147.80,145.53 148.60,145.41 149.40,145.27 150.20,145.12 151.00,144.95 151.80,144.77 152.60,144.58 153.40,144.36 154.20,144.13 155.00,143.87 155.80,143.59 156.60,143.28 157.40,142.94 158.20,142.57 159.00,142.16 159.80,141.71 160.60,141.23 161.40,140.71 162.20,140.15 163.00,139.56 163.80,138.94 164.60,138.30 165.40,137.67 166.20,137.05 167.00,136.48 167.80,135.98 168.60,135.58 169.40,135.30 170.20,135.18 171.00,135.21 171.80,135.39 172.60,135.71 173.40,136.16 174.20,136.69 175.00,137.28 175.80,137.91 176.60,138.55 177.40,139.18 178.20,139.79 179.00,140.37 179.80,140.91 180.60,141.42 181.40,141.89 182.20,142.32 183.00,142.71 183.80,143.07 184.60,143.40 185.40,143.70 186.20,143.97 187.00,144.22 187.80,144.45 188.60,144.66 189.40,144.84 190.20,145.02 191.00,145.18 191.80,145.32 192.60,145.46 193.40,145.58 194.20,145.69 195.00,145.80 195.80,145.89 196.60,145.98 197.40,146.07 198.20,146.14 199.00,146.22 199.80,146.28 200.60,146.34 201.40,146.40 202.20,146.46 203.00,146.51 203.80,146.55 204.60,146.60 205.40,146.64 206.20,146.68 207.00,146.72 207.80,146.75 208.60,146.78 209.40,146.82 210.20,146.84 211.00,146.87 211.80,146.90 212.60,146.92 213.40,146.95 214.20,146.97 215.00,146.99 215.80,147.01 216.60,147.03 217.40,147.05 218.20,147.07 219.00,147.08 219.80,147.10 220.60,147.11 221.40,147.13 222.20,147.14 223.00,147.15 223.80,147.17 224.60,147.18 225.40,147.19 226.20,147.20 227.00,147.21 227.80,147.22 228.60,147.23 229.40,147.24 230.20,147.25 231.00,147.26 231.80,147.26 232.60,147.27 233.40,147.28 234.20,147.29 235.00,147.29 235.80,147.30 236.60,147.31 237.40,147.31 238.20,147.32 239.00,147.32 239.80,147.33 240.60,147.34 241.40,147.34 242.20,147.35 243.00,147.35 243.80,147.36 244.60,147.36 245.40,147.36 246.20,147.37 247.00,147.37 247.80,147.38 248.60,147.38 249.40,147.38 250.20,147.39 251.00,147.39 251.80,147.39 252.60,147.40 253.40,147.40 254.20,147.40 255.00,147.41 255.80,147.41 256.60,147.41 257.40,147.41 258.20,147.42 259.00,147.42 259.80,147.42 260.60,147.42 261.40,147.43 262.20,147.43 263.00,147.43 263.80,147.43 264.60,147.43 265.40,147.44 266.20,147.44 267.00,147.44 267.80,147.44 268.60,147.44 269.40,147.44 270.20,147.45 271.00,147.45 271.80,147.45 272.60,147.45 273.40,147.45 274.20,147.45 275.00,147.45 275.80,147.46 276.60,147.46 277.40,147.46 278.20,147.46 279.00,147.46 279.80,147.46 280.60,147.46 281.40,147.46 282.20,147.46 283.00,147.47 283.80,147.47 284.60,147.47 285.40,147.47 286.20,147.47 287.00,147.47 287.80,147.47 288.60,147.47 289.40,147.47 290.20,147.47 291.00,147.47 291.80,147.47 292.60,147.47 293.40,147.48 294.20,147.48 295.00,147.48 295.80,147.48 296.60,147.48 297.40,147.48 298.20,147.48 299.00,147.48 299.80,147.48 300.60,147.48 301.40,147.48 302.20,147.48 303.00,147.48 303.80,147.48 304.60,147.48 305.40,147.48 306.20,147.48 307.00,147.48 307.80,147.49 308.60,147.49 309.40,147.49 310.20,147.49 311.00,147.49 311.80,147.49 312.60,147.49 313.40,147.49 314.20,147.49 315.00,147.49 315.80,147.49 316.60,147.49 317.40,147.49 318.20,147.49 319.00,147.49 319.80,147.49 320.60,147.49 321.40,147.49 322.20,147.49 323.00,147.49 323.80,147.49 324.60,147.49 325.40,147.49 326.20,147.49 327.00,147.49 327.80,147.49 328.60,147.49 329.40,147.49 330.20,147.49 331.00,147.49 331.80,147.49 332.60,147.49 333.40,147.49 334.20,147.49 335.00,147.49 335.80,147.49 336.60,147.49 337.40,147.49 338.20,147.49 339.00,147.49 339.80,147.49 340.60,147.50 341.40,147.50 342.20,147.50 343.00,147.50 343.80,147.50 344.60,147.50 345.40,147.50 346.20,147.50 347.00,147.50 347.80,147.50 348.60,147.50 349.40,147.50 350.20,147.50 351.00,147.50 351.80,147.50 352.60,147.50 353.40,147.50 354.20,147.50 355.00,147.50 355.80,147.50 356.60,147.50 357.40,147.50 358.20,147.50 359.00,147.50 359.80,147.50 360.60,147.50 361.40,147.50 362.20,147.50 363.00,147.50 363.80,147.50 364.60,147.50 365.40,147.50 366.20,147.50 367.00,147.50 367.80,147.50 368.60,147.50 369.40,147.50 370.20,147.50 371.00,147.50 371.80,147.50 372.60,147.50 373.40,147.50 374.20,147.50 375.00,147.50 375.80,147.50 376.60,147.50 377.40,147.50 378.20,147.50 379.00,147.50 379.80,147.50 380.60,147.50 381.40,147.50 382.20,147.50 383.00,147.50 383.80,147.50 384.60,147.50 385.40,147.50 386.20,147.50 387.00,147.50 387.80,147.50 388.60,147.50 389.40,147.50 390.20,147.50 391.00,147.50 391.80,147.50 392.60,147.50 393.40,147.50 394.20,147.50 395.00,147.50 395.80,147.50 396.60,147.50 397.40,147.50 398.20,147.50 399.00,147.50 399.80,147.50 400.60,147.50 401.40,147.50 402.20,147.50 403.00,147.50 403.80,147.50 404.60,147.50 405.40,147.50 406.20,147.50 407.00,147.50 407.80,147.50 408.60,147.50 409.40,147.50 410.20,147.50 411.00,147.50 411.80,147.50 412.60,147.50 413.40,147.50 414.20,147.50 415.00,147.50 415.80,147.50 416.60,147.50 417.40,147.50 418.20,147.50 419.00,147.50 419.80,147.50 420.60,147.50 421.40,147.50 422.20,147.50 423.00,147.50 423.80,147.50 424.60,147.50 425.40,147.50 426.20,147.50 427.00,147.50 427.80,147.50 428.60,147.50 429.40,147.50 430.20,147.50 431.00,147.50 431.80,147.50" fill="none" stroke="#a8c8d8" stroke-width="0.7" opacity="0.55"/>
<rect x="15.80" y="146.30" width="416.80" height="2.4" fill="#7a7a7a"/>
<polyline points="15.80,131.68 16.60,131.45 17.40,131.23 18.20,131.01 19.00,130.80 19.80,130.59 20.60,130.38 21.40,130.17 22.20,129.97 23.00,129.77 23.80,129.58 24.60,129.40 25.40,129.22 26.20,129.04 27.00,128.87 27.80,128.71 28.60,128.56 29.40,128.41 30.20,128.27 31.00,128.14 31.80,128.02 32.60,127.90 33.40,127.80 34.20,127.70 35.00,127.61 35.80,127.53 36.60,127.46 37.40,127.40 38.20,127.35 39.00,127.31 39.80,127.28 40.60,127.25 41.40,127.24 42.20,127.24 43.00,127.25 43.80,127.27 44.60,127.29 45.40,127.33 46.20,127.37 47.00,127.43 47.80,127.49 48.60,127.56 49.40,127.64 50.20,127.73 51.00,127.83 51.80,127.93 52.60,128.04 53.40,128.16 54.20,128.28 55.00,128.41 55.80,128.55 56.60,128.69 57.40,128.83 58.20,128.98 59.00,129.14 59.80,129.30 60.60,129.46 61.40,129.62 62.20,129.79 63.00,129.96 63.80,130.13 64.60,130.30 65.40,130.47 66.20,130.65 67.00,130.82 67.80,131.00 68.60,131.17 69.40,131.34 70.20,131.51 71.00,131.68 71.80,131.85 72.60,132.01 73.40,132.17 74.20,132.33 75.00,132.48 75.80,132.64 76.60,132.78 77.40,132.92 78.20,133.06 79.00,133.19 79.80,133.32 80.60,133.44 81.40,133.55 82.20,133.66 83.00,133.76 83.80,133.85 84.60,133.93 85.40,134.00 86.20,134.07 87.00,134.13 87.80,134.17 88.60,134.21 89.40,134.23 90.20,134.24 91.00,134.24 91.80,134.23 92.60,134.20 93.40,134.16 94.20,134.10 95.00,134.03 95.80,133.93 96.60,133.82 97.40,133.69 98.20,133.54 99.00,133.37 99.80,133.18 100.60,132.96 101.40,132.71 102.20,132.44 103.00,132.14 103.80,131.81 104.60,131.45 105.40,131.05 106.20,130.62 107.00,130.15 107.80,129.64 108.60,129.10 109.40,128.52 110.20,127.89 111.00,127.23 111.80,126.52 112.60,125.78 113.40,125.00 114.20,124.20 115.00,123.37 115.80,122.52 116.60,121.66 117.40,120.82 118.20,119.99 119.00,119.20 119.80,118.47 120.60,117.81 121.40,117.26 122.20,116.82 123.00,116.52 123.80,116.36 124.60,116.37 125.40,116.53 126.20,116.84 127.00,117.31 127.80,117.90 128.60,118.61 129.40,119.41 130.20,120.28 131.00,121.21 131.80,122.17 132.60,123.14 133.40,124.12 134.20,125.09 135.00,126.03 135.80,126.96 136.60,127.84 137.40,128.70 138.20,129.51 139.00,130.28 139.80,131.01 140.60,131.69 141.40,132.34 142.20,132.94 143.00,133.50 143.80,134.02 144.60,134.51 145.40,134.95 146.20,135.36 147.00,135.73 147.80,136.06 148.60,136.37 149.40,136.63 150.20,136.86 151.00,137.06 151.80,137.22 152.60,137.35 153.40,137.45 154.20,137.50 155.00,137.52 155.80,137.50 156.60,137.44 157.40,137.34 158.20,137.19 159.00,137.00 159.80,136.76 160.60,136.47 161.40,136.13 162.20,135.75 163.00,135.33 163.80,134.87 164.60,134.39 165.40,133.90 166.20,133.42 167.00,132.98 167.80,132.61 168.60,132.34 169.40,132.18 170.20,132.17 171.00,132.31 171.80,132.60 172.60,133.03 173.40,133.57 174.20,134.19 175.00,134.88 175.80,135.59 176.60,136.31 177.40,137.02 178.20,137.71 179.00,138.37 179.80,138.99 180.60,139.56 181.40,140.10 182.20,140.60 183.00,141.06 183.80,141.48 184.60,141.87 185.40,142.23 186.20,142.56 187.00,142.86 187.80,143.14 188.60,143.40 189.40,143.64 190.20,143.86 191.00,144.07 191.80,144.26 192.60,144.44 193.40,144.61 194.20,144.77 195.00,144.91 195.80,145.05 196.60,145.18 197.40,145.31 198.20,145.42 199.00,145.53 199.80,145.64 200.60,145.74 201.40,145.83 202.20,145.92 203.00,146.01 203.80,146.09 204.60,146.17 205.40,146.24 206.20,146.31 207.00,146.38 207.80,146.45 208.60,146.52 209.40,146.58 210.20,146.64 211.00,146.70 211.80,146.76 212.60,146.81 213.40,146.87 214.20,146.92 215.00,146.97 215.80,147.02 216.60,147.07 217.40,147.12 218.20,147.16 219.00,147.21 219.80,147.26 220.60,147.30 221.40,147.35 222.20,147.39 223.00,147.43 223.80,147.48 224.60,147.52 225.40,147.56 226.20,147.60 227.00,147.64 227.80,147.69 228.60,147.73 229.40,147.77 230.20,147.81 231.00,147.85 231.80,147.89 232.60,147.93 233.40,147.97 234.20,148.01 235.00,148.06 235.80,148.10 236.60,148.14 237.40,148.18 238.20,148.22 239.00,148.27 239.80,148.31 240.60,148.35 241.40,148.40 242.20,148.44 243.00,148.49 243.80,148.53 244.60,148.58 245.40,148.62 246.20,148.67 247.00,148.72 247.80,148.77 248.60,148.82 249.40,148.86 250.20,148.92 251.00,148.97 251.80,149.02 252.60,149.07 253.40,149.13 254.20,149.18 255.00,149.24 255.80,149.29 256.60,149.35 257.40,149.41 258.20,149.47 259.00,149.53 259.80,149.59 260.60,149.66 261.40,149.72 262.20,149.79 263.00,149.85 263.80,149.92 264.60,149.99 265.40,150.06 266.20,150.13 267.00,150.21 267.80,150.28 268.60,150.36 269.40,150.44 270.20,150.51 271.00,150.60 271.80,150.68 272.60,150.76 273.40,150.85 274.20,150.94 275.00,151.03 275.80,151.12 276.60,151.21 277.40,151.30 278.20,151.40 279.00,151.50 279.80,151.60 280.60,151.70 281.40,151.81 282.20,151.91 283.00,152.02 283.80,152.13 284.60,152.24 285.40,152.36 286.20,152.48 287.00,152.59 287.80,152.72 288.60,152.84 289.40,152.96 290.20,153.09 291.00,153.22 291.80,153.35 292.60,153.49 293.40,153.63 294.20,153.77 295.00,153.91 295.80,154.05 296.60,154.20 297.40,154.35 298.20,154.50 299.00,154.65 299.80,154.81 300.60,154.97 301.40,155.13 302.20,155.29 303.00,155.46 303.80,155.63 304.60,155.80 305.40,155.97 306.20,156.15 307.00,156.33 307.80,156.51 308.60,156.69 309.40,156.88 310.20,157.06 311.00,157.25 311.80,157.45 312.60,157.64 313.40,157.84 314.20,158.04 315.00,158.24 315.80,158.45 316.60,158.65 317.40,158.86 318.20,159.07 319.00,159.28 319.80,159.50 320.60,159.71 321.40,159.93 322.20,160.15 323.00,160.37 323.80,160.60 324.60,160.82 325.40,161.05 326.20,161.28 327.00,161.51 327.80,161.74 328.60,161.97 329.40,162.20 330.20,162.43 331.00,162.67 331.80,162.90 332.60,163.14 333.40,163.38 334.20,163.61 335.00,163.85 335.80,164.09 336.60,164.32 337.40,164.56 338.20,164.80 339.00,165.03 339.80,165.27 340.60,165.50 341.40,165.74 342.20,165.97 343.00,166.20 343.80,166.43 344.60,166.66 345.40,166.89 346.20,167.12 347.00,167.34 347.80,167.56 348.60,167.78 349.40,168.00 350.20,168.21 351.00,168.42 351.80,168.63 352.60,168.84 353.40,169.04 354.20,169.24 355.00,169.43 355.80,169.62 356.60,169.81 357.40,169.99 358.20,170.17 359.00,170.34 359.80,170.51 360.60,170.67 361.40,170.83 362.20,170.98 363.00,171.13 363.80,171.27 364.60,171.40 365.40,171.53 366.20,171.66 367.00,171.77 367.80,171.88 368.60,171.99 369.40,172.08 370.20,172.18 371.00,172.26 371.80,172.34 372.60,172.41 373.40,172.47 374.20,172.51 375.00,172.55 375.80,172.56 376.60,172.56 377.40,172.55 378.20,172.52 379.00,172.47 379.80,172.41 380.60,172.34 381.40,172.24 382.20,172.14 383.00,172.01 383.80,171.88 384.60,171.72 385.40,171.56 386.20,171.38 387.00,171.18 387.80,170.97 388.60,170.75 389.40,170.51 390.20,170.26 391.00,170.00 391.80,169.72 392.60,169.43 393.40,169.13 394.20,168.82 395.00,168.50 395.80,168.17 396.60,167.83 397.40,167.47 398.20,167.11 399.00,166.74 399.80,166.36 400.60,165.98 401.40,165.58 402.20,165.18 403.00,164.78 403.80,164.36 404.60,163.94 405.40,163.52 406.20,163.09 407.00,162.66 407.80,162.22 408.60,161.78 409.40,161.34 410.20,160.89 411.00,160.45 411.80,160.00 412.60,159.55 413.40,159.10 414.20,158.65 415.00,158.20 415.80,157.75 416.60,157.31 417.40,156.86 418.20,156.41 419.00,155.97 419.80,155.53 420.60,155.09 421.40,154.66 422.20,154.23 423.00,153.80 423.80,153.38 424.60,152.96 425.40,152.55 426.20,152.14 427.00,151.73 427.80,151.34 428.60,150.94 429.40,150.56 430.20,150.17 431.00,149.80 431.80,149.43" fill="none" stroke="#000" stroke-width="2.6" opacity="0.55"/>
<polyline points="15.80,131.68 16.60,131.45 17.40,131.23 18.20,131.01 19.00,130.80 19.80,130.59 20.60,130.38 21.40,130.17 22.20,129.97 23.00,129.77 23.80,129.58 24.60,129.40 25.40,129.22 26.20,129.04 27.00,128.87 27.80,128.71 28.60,128.56 29.40,128.41 30.20,128.27 31.00,128.14 31.80,128.02 32.60,127.90 33.40,127.80 34.20,127.70 35.00,127.61 35.80,127.53 36.60,127.46 37.40,127.40 38.20,127.35 39.00,127.31 39.80,127.28 40.60,127.25 41.40,127.24 42.20,127.24 43.00,127.25 43.80,127.27 44.60,127.29 45.40,127.33 46.20,127.37 47.00,127.43 47.80,127.49 48.60,127.56 49.40,127.64 50.20,127.73 51.00,127.83 51.80,127.93 52.60,128.04 53.40,128.16 54.20,128.28 55.00,128.41 55.80,128.55 56.60,128.69 57.40,128.83 58.20,128.98 59.00,129.14 59.80,129.30 60.60,129.46 61.40,129.62 62.20,129.79 63.00,129.96 63.80,130.13 64.60,130.30 65.40,130.47 66.20,130.65 67.00,130.82 67.80,131.00 68.60,131.17 69.40,131.34 70.20,131.51 71.00,131.68 71.80,131.85 72.60,132.01 73.40,132.17 74.20,132.33 75.00,132.48 75.80,132.64 76.60,132.78 77.40,132.92 78.20,133.06 79.00,133.19 79.80,133.32 80.60,133.44 81.40,133.55 82.20,133.66 83.00,133.76 83.80,133.85 84.60,133.93 85.40,134.00 86.20,134.07 87.00,134.13 87.80,134.17 88.60,134.21 89.40,134.23 90.20,134.24 91.00,134.24 91.80,134.23 92.60,134.20 93.40,134.16 94.20,134.10 95.00,134.03 95.80,133.93 96.60,133.82 97.40,133.69 98.20,133.54 99.00,133.37 99.80,133.18 100.60,132.96 101.40,132.71 102.20,132.44 103.00,132.14 103.80,131.81 104.60,131.45 105.40,131.05 106.20,130.62 107.00,130.15 107.80,129.64 108.60,129.10 109.40,128.52 110.20,127.89 111.00,127.23 111.80,126.52 112.60,125.78 113.40,125.00 114.20,124.20 115.00,123.37 115.80,122.52 116.60,121.66 117.40,120.82 118.20,119.99 119.00,119.20 119.80,118.47 120.60,117.81 121.40,117.26 122.20,116.82 123.00,116.52 123.80,116.36 124.60,116.37 125.40,116.53 126.20,116.84 127.00,117.31 127.80,117.90 128.60,118.61 129.40,119.41 130.20,120.28 131.00,121.21 131.80,122.17 132.60,123.14 133.40,124.12 134.20,125.09 135.00,126.03 135.80,126.96 136.60,127.84 137.40,128.70 138.20,129.51 139.00,130.28 139.80,131.01 140.60,131.69 141.40,132.34 142.20,132.94 143.00,133.50 143.80,134.02 144.60,134.51 145.40,134.95 146.20,135.36 147.00,135.73 147.80,136.06 148.60,136.37 149.40,136.63 150.20,136.86 151.00,137.06 151.80,137.22 152.60,137.35 153.40,137.45 154.20,137.50 155.00,137.52 155.80,137.50 156.60,137.44 157.40,137.34 158.20,137.19 159.00,137.00 159.80,136.76 160.60,136.47 161.40,136.13 162.20,135.75 163.00,135.33 163.80,134.87 164.60,134.39 165.40,133.90 166.20,133.42 167.00,132.98 167.80,132.61 168.60,132.34 169.40,132.18 170.20,132.17 171.00,132.31 171.80,132.60 172.60,133.03 173.40,133.57 174.20,134.19 175.00,134.88 175.80,135.59 176.60,136.31 177.40,137.02 178.20,137.71 179.00,138.37 179.80,138.99 180.60,139.56 181.40,140.10 182.20,140.60 183.00,141.06 183.80,141.48 184.60,141.87 185.40,142.23 186.20,142.56 187.00,142.86 187.80,143.14 188.60,143.40 189.40,143.64 190.20,143.86 191.00,144.07 191.80,144.26 192.60,144.44 193.40,144.61 194.20,144.77 195.00,144.91 195.80,145.05 196.60,145.18 197.40,145.31 198.20,145.42 199.00,145.53 199.80,145.64 200.60,145.74 201.40,145.83 202.20,145.92 203.00,146.01 203.80,146.09 204.60,146.17 205.40,146.24 206.20,146.31 207.00,146.38 207.80,146.45 208.60,146.52 209.40,146.58 210.20,146.64 211.00,146.70 211.80,146.76 212.60,146.81 213.40,146.87 214.20,146.92 215.00,146.97 215.80,147.02 216.60,147.07 217.40,147.12 218.20,147.16 219.00,147.21 219.80,147.26 220.60,147.30 221.40,147.35 222.20,147.39 223.00,147.43 223.80,147.48 224.60,147.52 225.40,147.56 226.20,147.60 227.00,147.64 227.80,147.69 228.60,147.73 229.40,147.77 230.20,147.81 231.00,147.85 231.80,147.89 232.60,147.93 233.40,147.97 234.20,148.01 235.00,148.06 235.80,148.10 236.60,148.14 237.40,148.18 238.20,148.22 239.00,148.27 239.80,148.31 240.60,148.35 241.40,148.40 242.20,148.44 243.00,148.49 243.80,148.53 244.60,148.58 245.40,148.62 246.20,148.67 247.00,148.72 247.80,148.77 248.60,148.82 249.40,148.86 250.20,148.92 251.00,148.97 251.80,149.02 252.60,149.07 253.40,149.13 254.20,149.18 255.00,149.24 255.80,149.29 256.60,149.35 257.40,149.41 258.20,149.47 259.00,149.53 259.80,149.59 260.60,149.66 261.40,149.72 262.20,149.79 263.00,149.85 263.80,149.92 264.60,149.99 265.40,150.06 266.20,150.13 267.00,150.21 267.80,150.28 268.60,150.36 269.40,150.44 270.20,150.51 271.00,150.60 271.80,150.68 272.60,150.76 273.40,150.85 274.20,150.94 275.00,151.03 275.80,151.12 276.60,151.21 277.40,151.30 278.20,151.40 279.00,151.50 279.80,151.60 280.60,151.70 281.40,151.81 282.20,151.91 283.00,152.02 283.80,152.13 284.60,152.24 285.40,152.36 286.20,152.48 287.00,152.59 287.80,152.72 288.60,152.84 289.40,152.96 290.20,153.09 291.00,153.22 291.80,153.35 292.60,153.49 293.40,153.63 294.20,153.77 295.00,153.91 295.80,154.05 296.60,154.20 297.40,154.35 298.20,154.50 299.00,154.65 299.80,154.81 300.60,154.97 301.40,155.13 302.20,155.29 303.00,155.46 303.80,155.63 304.60,155.80 305.40,155.97 306.20,156.15 307.00,156.33 307.80,156.51 308.60,156.69 309.40,156.88 310.20,157.06 311.00,157.25 311.80,157.45 312.60,157.64 313.40,157.84 314.20,158.04 315.00,158.24 315.80,158.45 316.60,158.65 317.40,158.86 318.20,159.07 319.00,159.28 319.80,159.50 320.60,159.71 321.40,159.93 322.20,160.15 323.00,160.37 323.80,160.60 324.60,160.82 325.40,161.05 326.20,161.28 327.00,161.51 327.80,161.74 328.60,161.97 329.40,162.20 330.20,162.43 331.00,162.67 331.80,162.90 332.60,163.14 333.40,163.38 334.20,163.61 335.00,163.85 335.80,164.09 336.60,164.32 337.40,164.56 338.20,164.80 339.00,165.03 339.80,165.27 340.60,165.50 341.40,165.74 342.20,165.97 343.00,166.20 343.80,166.43 344.60,166.66 345.40,166.89 346.20,167.12 347.00,167.34 347.80,167.56 348.60,167.78 349.40,168.00 350.20,168.21 351.00,168.42 351.80,168.63 352.60,168.84 353.40,169.04 354.20,169.24 355.00,169.43 355.80,169.62 356.60,169.81 357.40,169.99 358.20,170.17 359.00,170.34 359.80,170.51 360.60,170.67 361.40,170.83 362.20,170.98 363.00,171.13 363.80,171.27 364.60,171.40 365.40,171.53 366.20,171.66 367.00,171.77 367.80,171.88 368.60,171.99 369.40,172.08 370.20,172.18 371.00,172.26 371.80,172.34 372.60,172.41 373.40,172.47 374.20,172.51 375.00,172.55 375.80,172.56 376.60,172.56 377.40,172.55 378.20,172.52 379.00,172.47 379.80,172.41 380.60,172.34 381.40,172.24 382.20,172.14 383.00,172.01 383.80,171.88 384.60,171.72 385.40,171.56 386.20,171.38 387.00,171.18 387.80,170.97 388.60,170.75 389.40,170.51 390.20,170.26 391.00,170.00 391.80,169.72 392.60,169.43 393.40,169.13 394.20,168.82 395.00,168.50 395.80,168.17 396.60,167.83 397.40,167.47 398.20,167.11 399.00,166.74 399.80,166.36 400.60,165.98 401.40,165.58 402.20,165.18 403.00,164.78 403.80,164.36 404.60,163.94 405.40,163.52 406.20,163.09 407.00,162.66 407.80,162.22 408.60,161.78 409.40,161.34 410.20,160.89 411.00,160.45 411.80,160.00 412.60,159.55 413.40,159.10 414.20,158.65 415.00,158.20 415.80,157.75 416.60,157.31 417.40,156.86 418.20,156.41 419.00,155.97 419.80,155.53 420.60,155.09 421.40,154.66 422.20,154.23 423.00,153.80 423.80,153.38 424.60,152.96 425.40,152.55 426.20,152.14 427.00,151.73 427.80,151.34 428.60,150.94 429.40,150.56 430.20,150.17 431.00,149.80 431.80,149.43" fill="none" stroke="#26a4ec" stroke-width="1.3"/>
<text x="40.00" y="121.00" font-size="6" font-weight="bold" fill="#fff" text-anchor="middle" stroke="#000" stroke-width="1.2" paint-order="stroke">1</text>
<rect x="39.60" y="144.00" width="0.8" height="8" fill="#aaa" opacity="0.7"/>
<text x="83.00" y="140.50" font-size="6" font-weight="bold" fill="#fff" text-anchor="middle" stroke="#000" stroke-width="1.2" paint-order="stroke">2</text>
<rect x="82.60" y="144.00" width="0.8" height="8" fill="#aaa" opacity="0.7"/>
<text x="124.70" y="113.00" font-size="6" font-weight="bold" fill="#fff" text-anchor="middle" stroke="#000" stroke-width="1.2" paint-order="stroke">3</text>
<rect x="124.30" y="144.00" width="0.8" height="8" fill="#aaa" opacity="0.7"/>
<text x="170.40" y="127.50" font-size="6" font-weight="bold" fill="#fff" text-anchor="middle" stroke="#000" stroke-width="1.2" paint-order="stroke">4</text>
<rect x="170.00" y="144.00" width="0.8" height="8" fill="#aaa" opacity="0.7"/>
<text x="209.30" y="140.50" font-size="6" font-weight="bold" fill="#fff" text-anchor="middle" stroke="#000" stroke-width="1.2" paint-order="stroke">5</text>
<rect x="208.90" y="144.00" width="0.8" height="8" fill="#aaa" opacity="0.7"/>
<text x="230.00" y="140.50" font-size="6" font-weight="bold" fill="#fff" text-anchor="middle" stroke="#000" stroke-width="1.2" paint-order="stroke">11</text>
<rect x="229.60" y="144.00" width="0.8" height="8" fill="#aaa" opacity="0.7"/>
<text x="251.50" y="140.50" font-size="6" font-weight="bold" fill="#fff" text-anchor="middle" stroke="#000" stroke-width="1.2" paint-order="stroke">6</text>
<rect x="251.10" y="144.00" width="0.8" height="8" fill="#aaa" opacity="0.7"/>
<text x="293.00" y="140.50" font-size="6" font-weight="bold" fill="#fff" text-anchor="middle" stroke="#000" stroke-width="1.2" paint-order="stroke">7</text>
<rect x="292.60" y="144.00" width="0.8" height="8" fill="#aaa" opacity="0.7"/>
<text x="318.00" y="140.50" font-size="6" font-weight="bold" fill="#fff" text-anchor="middle" stroke="#000" stroke-width="1.2" paint-order="stroke">12</text>
<rect x="317.60" y="144.00" width="0.8" height="8" fill="#aaa" opacity="0.7"/>
<text x="335.00" y="140.50" font-size="6" font-weight="bold" fill="#fff" text-anchor="middle" stroke="#000" stroke-width="1.2" paint-order="stroke">8</text>
<rect x="334.60" y="144.00" width="0.8" height="8" fill="#aaa" opacity="0.7"/>
<text x="419.00" y="140.50" font-size="6" font-weight="bold" fill="#fff" text-anchor="middle" stroke="#000" stroke-width="1.2" paint-order="stroke">10</text>
<rect x="418.60" y="144.00" width="0.8" height="8" fill="#aaa" opacity="0.7"/>
<text x="371.00" y="165.50" font-size="6" font-weight="bold" fill="#fff" text-anchor="middle" stroke="#000" stroke-width="1.2" paint-order="stroke">9</text>
<rect x="370.60" y="144.00" width="0.8" height="8" fill="#aaa" opacity="0.7"/>
<text x="6" y="282" font-size="6.6" fill="#c8c8c8">Active</text>
<text x="6" y="293" font-size="6.6" fill="#c8c8c8">Filter</text>
<rect x="44.80" y="274" width="13.29" height="9" fill="#1774c8"/>
<rect x="44.80" y="276" width="13.29" height="1" fill="#2a8ee0" opacity="0.7"/>
<rect x="44.80" y="281.5" width="13.29" height="1.5" fill="#2aa4f4"/>
<rect x="44.90" y="286" width="13.09" height="8.5" fill="#1466b0"/>
<text x="51.45" y="293" font-size="6.8" fill="#f0f0f0" text-anchor="middle">1</text>
<rect x="58.69" y="274" width="13.29" height="9" fill="#1774c8"/>
<rect x="58.69" y="276" width="13.29" height="1" fill="#2a8ee0" opacity="0.7"/>
<rect x="58.69" y="281.5" width="13.29" height="1.5" fill="#2aa4f4"/>
<rect x="58.79" y="286" width="13.09" height="8.5" fill="#474747"/>
<text x="65.34" y="293" font-size="6.8" fill="#f0f0f0" text-anchor="middle">2</text>
<rect x="72.58" y="274" width="13.29" height="9" fill="#1774c8"/>
<rect x="72.58" y="276" width="13.29" height="1" fill="#2a8ee0" opacity="0.7"/>
<rect x="72.58" y="281.5" width="13.29" height="1.5" fill="#2aa4f4"/>
<rect x="72.68" y="286" width="13.09" height="8.5" fill="#474747"/>
<text x="79.23" y="293" font-size="6.8" fill="#f0f0f0" text-anchor="middle">3</text>
<rect x="86.48" y="274" width="13.29" height="9" fill="#1774c8"/>
<rect x="86.48" y="276" width="13.29" height="1" fill="#2a8ee0" opacity="0.7"/>
<rect x="86.48" y="281.5" width="13.29" height="1.5" fill="#2aa4f4"/>
<rect x="86.58" y="286" width="13.09" height="8.5" fill="#474747"/>
<text x="93.12" y="293" font-size="6.8" fill="#f0f0f0" text-anchor="middle">4</text>
<rect x="100.37" y="274" width="13.29" height="9" fill="#1774c8"/>
<rect x="100.37" y="276" width="13.29" height="1" fill="#2a8ee0" opacity="0.7"/>
<rect x="100.37" y="281.5" width="13.29" height="1.5" fill="#2aa4f4"/>
<rect x="100.47" y="286" width="13.09" height="8.5" fill="#474747"/>
<text x="107.01" y="293" font-size="6.8" fill="#f0f0f0" text-anchor="middle">5</text>
<rect x="114.26" y="274" width="13.29" height="9" fill="#1774c8"/>
<rect x="114.26" y="276" width="13.29" height="1" fill="#2a8ee0" opacity="0.7"/>
<rect x="114.26" y="281.5" width="13.29" height="1.5" fill="#2aa4f4"/>
<rect x="114.36" y="286" width="13.09" height="8.5" fill="#474747"/>
<text x="120.90" y="293" font-size="6.8" fill="#f0f0f0" text-anchor="middle">6</text>
<rect x="128.15" y="274" width="13.29" height="9" fill="#1774c8"/>
<rect x="128.15" y="276" width="13.29" height="1" fill="#2a8ee0" opacity="0.7"/>
<rect x="128.15" y="281.5" width="13.29" height="1.5" fill="#2aa4f4"/>
<rect x="128.25" y="286" width="13.09" height="8.5" fill="#474747"/>
<text x="134.80" y="293" font-size="6.8" fill="#f0f0f0" text-anchor="middle">7</text>
<rect x="142.04" y="274" width="13.29" height="9" fill="#1774c8"/>
<rect x="142.04" y="276" width="13.29" height="1" fill="#2a8ee0" opacity="0.7"/>
<rect x="142.04" y="281.5" width="13.29" height="1.5" fill="#2aa4f4"/>
<rect x="142.14" y="286" width="13.09" height="8.5" fill="#474747"/>
<text x="148.69" y="293" font-size="6.8" fill="#f0f0f0" text-anchor="middle">8</text>
<rect x="155.93" y="274" width="13.29" height="9" fill="#1774c8"/>
<rect x="155.93" y="276" width="13.29" height="1" fill="#2a8ee0" opacity="0.7"/>
<rect x="155.93" y="281.5" width="13.29" height="1.5" fill="#2aa4f4"/>
<rect x="156.03" y="286" width="13.09" height="8.5" fill="#474747"/>
<text x="162.58" y="293" font-size="6.8" fill="#f0f0f0" text-anchor="middle">9</text>
<rect x="169.83" y="274" width="13.29" height="9" fill="#1774c8"/>
<rect x="169.83" y="276" width="13.29" height="1" fill="#2a8ee0" opacity="0.7"/>
<rect x="169.83" y="281.5" width="13.29" height="1.5" fill="#2aa4f4"/>
<rect x="169.93" y="286" width="13.09" height="8.5" fill="#474747"/>
<text x="176.47" y="293" font-size="6.8" fill="#f0f0f0" text-anchor="middle">10</text>
<rect x="183.72" y="274" width="13.29" height="9" fill="#1774c8"/>
<rect x="183.72" y="276" width="13.29" height="1" fill="#2a8ee0" opacity="0.7"/>
<rect x="183.72" y="281.5" width="13.29" height="1.5" fill="#2aa4f4"/>
<rect x="183.82" y="286" width="13.09" height="8.5" fill="#474747"/>
<text x="190.36" y="293" font-size="6.8" fill="#f0f0f0" text-anchor="middle">11</text>
<rect x="197.61" y="274" width="13.29" height="9" fill="#1774c8"/>
<rect x="197.61" y="276" width="13.29" height="1" fill="#2a8ee0" opacity="0.7"/>
<rect x="197.61" y="281.5" width="13.29" height="1.5" fill="#2aa4f4"/>
<rect x="197.71" y="286" width="13.09" height="8.5" fill="#474747"/>
<text x="204.25" y="293" font-size="6.8" fill="#f0f0f0" text-anchor="middle">12</text>
<rect x="44.90" y="293.5" width="13.09" height="1" fill="#9cd0ff"/>
<rect x="243.50" y="275.50" width="44" height="20" fill="#4a4a4a"/>
<text x="265.50" y="288.00" font-size="6.6" fill="#f0f0f0" text-anchor="middle">FLATTEN</text>
<text x="6.00" y="316.00" font-size="6.2" fill="#b0b0b0">Type</text>
<text x="95.00" y="316.00" font-size="6.2" fill="#b0b0b0">Gain</text>
<text x="161.00" y="316.00" font-size="6.2" fill="#b0b0b0">Freq</text>
<text x="228.00" y="316.00" font-size="6.2" fill="#b0b0b0">Q</text>
<rect x="1.00" y="334.80" width="86" height="3" fill="#f4f4f4"/>
<text x="6.00" y="330.50" font-size="6.8" fill="#f0f0f0">PEQ</text>
<rect x="90.00" y="320.00" width="63" height="14.5" fill="#383838"/>
<rect x="90.00" y="334.80" width="63" height="3" fill="#f4f4f4"/>
<text x="95.00" y="330.50" font-size="6.8" fill="#f0f0f0">3.7 dB</text>
<rect x="156.00" y="320.00" width="63" height="14.5" fill="#383838"/>
<rect x="156.00" y="334.80" width="63" height="3" fill="#f4f4f4"/>
<text x="161.00" y="330.50" font-size="6.8" fill="#f0f0f0">30.2 Hz</text>
<rect x="223.00" y="320.00" width="63" height="14.5" fill="#383838"/>
<rect x="223.00" y="334.80" width="63" height="3" fill="#f4f4f4"/>
<text x="228.00" y="330.50" font-size="6.8" fill="#f0f0f0">0.70</text>
<path d="M76.50,326.00 L81.50,326.00 L79.00,330.00 Z" fill="#eee"/>
</svg>
<div style="left:168px;top:58px;width:107px;height:22px;background:#1a1a1a;box-shadow:0 1px 3px rgba(0,0,0,.5)"></div>
<div style="left:169.2px;top:60.2px;width:52px;height:17.8px;background:#1466b0;"></div>
<div style="left:169.2px;top:75.7px;width:52px;height:2.3px;background:#2a8ee0;"></div>
<div class="t c" style="left:135.2px;top:63.400000000000006px;font-size:6.2px;color:#fff;font-weight:bold">Input &amp; Output</div>
<div style="left:222.6px;top:61.2px;width:21.6px;height:16.4px;background:#4a4a4a;"></div>
<div class="t c" style="left:173.4px;top:63.7px;font-size:6.2px;color:#fff;font-weight:bold">Input</div>
<div style="left:245.1px;top:61.2px;width:29.1px;height:16.4px;background:#4a4a4a;"></div>
<div class="t c" style="left:199.64999999999998px;top:63.7px;font-size:6.2px;color:#fff;font-weight:bold">Output</div>
<svg style="left:1398px;top:786px" width="11" height="11" viewBox="0 0 11 11"><path d="M5.5 0.5 V10.5 M0.5 5.5 H10.5" stroke="#fff" stroke-width="1.3"/><circle cx="5.5" cy="5.5" r="2" fill="#232323"/></svg>
<div style="left:1418px;top:791px;width:6px;height:1px;background:#ddd;"></div>
<div style="left:1431px;top:791px;width:44px;height:1px;background:#3a3a3a;"></div>
<div style="left:1452.5px;top:786.5px;width:5px;height:9px;background:#fff;border-radius:1px"></div>
<svg style="left:1480px;top:788px" width="7" height="7" viewBox="0 0 7 7"><path d="M3.5 0.5 V6.5 M0.5 3.5 H6.5" stroke="#fff" stroke-width="1.2"/></svg>
<div class="t" style="left:1495.5px;top:785px;font-size:7px;color:#ccc;">90 %</div>
</body></html>
